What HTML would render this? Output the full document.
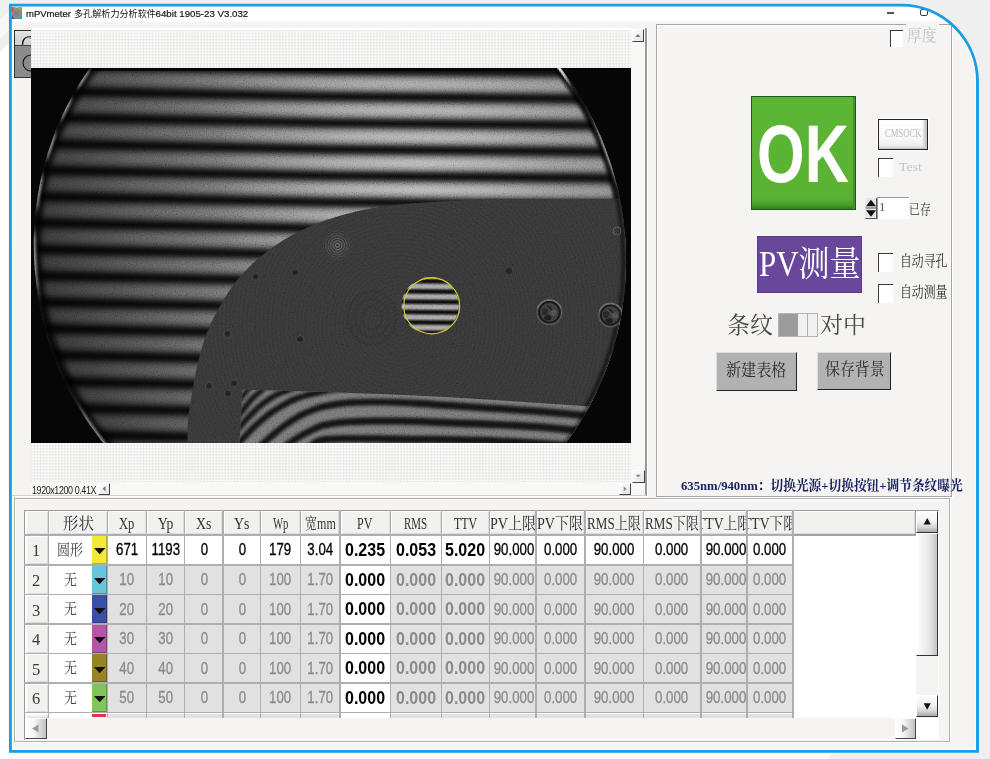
<!DOCTYPE html><html><head><meta charset="utf-8"><title>mPVmeter</title><style>
html,body{margin:0;padding:0}
html{background:#efefef}
body{width:990px;height:759px;overflow:hidden;background:#efefef;position:relative;font-family:"Liberation Sans",sans-serif}
#frame{position:absolute;left:10px;top:5px;width:968px;height:747px;border-top-right-radius:77px 77px;background:#f5f4f2;overflow:hidden}
#in{position:absolute;left:-10px;top:-5px;width:990px;height:759px}
</style></head><body><svg style="position:absolute;left:0;top:0" width="990" height="759"><polygon points="0,52 9,43 9,759 0,759" fill="#fff"/><polygon points="0,20 9,11 9,30 0,39" fill="#f8f8f8"/><polygon points="0,753 833,753 827,759 0,759" fill="#fff"/></svg><div id="frame"><div id="in"><svg style="position:absolute;left:0;top:0" width="990" height="759"><path d="M12.60 7.30 H901.00 A74.30 74.30 0 0 1 975.30 81.60 V749.20 H12.60 Z" fill="none" stroke="#fdfbf8" stroke-width="1.6"/></svg><div style="position:absolute;left:12.00px;top:6.00px;width:964.00px;height:16.00px;background:#fff"></div><div style="position:absolute;left:12.00px;top:7.30px;width:9.80px;height:12.00px;background:conic-gradient(from 0deg at 45% 50%,#e8d020,#70c030 12%,#30b060 25%,#20b0c0 38%,#3070c8 50%,#3040b0 62%,#6030a0 70%,#d02828 85%,#e89020 94%,#e8d020)"></div><div style="position:absolute;left:12.00px;top:8.30px;width:8.80px;height:10.30px;background:radial-gradient(circle,#7c7c7c 0,#848484 30%,#787878 36%,#8c8c8c 42%,#8a8a8a 100%);border-radius:50%"></div><div style="position:absolute;left:26.00px;top:9.40px;font:normal 9.50px/9.50px 'Liberation Sans';color:#151515;white-space:nowrap;transform-origin:0 0;transform:scaleX(1.000);-webkit-text-stroke:0.2px #151515;">mPVmeter</div><svg role="img" aria-label="多孔解析力分析软件" style="position:absolute;left:73.80px;top:9.30px;overflow:visible;" width="81.90" height="9.10" viewBox="0 -880 9000 1000" preserveAspectRatio="none"><text x="0" y="0" font-size="1000" textLength="9000" lengthAdjust="spacingAndGlyphs" fill="#151515" font-family="'Liberation Sans','Noto Sans CJK SC',sans-serif">多孔解析力分析软件</text></svg><div style="position:absolute;left:155.60px;top:9.40px;font:normal 9.70px/9.70px 'Liberation Sans';color:#151515;white-space:nowrap;transform-origin:0 0;transform:scaleX(1.000);-webkit-text-stroke:0.2px #151515;">64bit 1905-23 V3.032</div><div style="position:absolute;left:886.60px;top:12.20px;width:7.40px;height:1.40px;background:#555"></div><div style="position:absolute;left:920.2px;top:8.6px;width:5.4px;height:5.4px;border:1.5px solid #2a2a2a;border-radius:2.2px"></div><div style="position:absolute;left:13.50px;top:30.00px;width:18.00px;height:47.70px;background:#8c8c8c;border:1px solid #333;box-sizing:border-box"></div><div style="position:absolute;left:14.50px;top:31.00px;width:17.00px;height:14.00px;background:linear-gradient(#e4e4e4,#cfcfcf)"></div><div style="position:absolute;left:14.50px;top:45.00px;width:17.00px;height:1.00px;background:#444"></div><svg style="position:absolute;left:13.5px;top:30px" width="18" height="48" viewBox="0 0 18 48"><path d="M8.5 15 C8.5 9 11 6.5 18 6.5" fill="none" stroke="#111" stroke-width="1.2"/><circle cx="17" cy="33" r="8" fill="none" stroke="#111" stroke-width="1.1"/><rect x="15.5" y="7.5" width="2" height="1.5" fill="#4ab8e0"/></svg><div style="position:absolute;left:31.00px;top:28.00px;width:615.00px;height:468.00px;background:#fff"></div><svg style="position:absolute;left:31px;top:30px" width="600" height="452" viewBox="0 0 600 452"><defs><pattern id="dots" x="0.4" y="0.5" width="3.03" height="3.03" patternUnits="userSpaceOnUse"><rect x="0.7" y="0.7" width="1.7" height="1.7" fill="#fff"/></pattern></defs><rect width="600" height="452" fill="#ebebea"/><rect width="600" height="452" fill="url(#dots)"/></svg><div style="position:absolute;left:631.00px;top:28.00px;width:14.30px;height:454.00px;background:#f8f8f7"></div><div style="position:absolute;left:31.00px;top:482.00px;width:614.00px;height:13.20px;background:#f8f8f7"></div><div style="position:absolute;left:645.30px;top:28.00px;width:1.50px;height:468.30px;background:#9a9a9a"></div><div style="position:absolute;left:646.80px;top:28.00px;width:1.70px;height:468.30px;background:#fff"></div><div style="position:absolute;left:12.00px;top:495.20px;width:634.00px;height:1.00px;background:#d0d0d0"></div><div style="position:absolute;left:12.00px;top:496.20px;width:637.00px;height:1.20px;background:#fff"></div><div style="position:absolute;left:631.50px;top:29.00px;width:12.70px;height:13.30px;background:linear-gradient(135deg,#fff,#e2e2e2);border-right:1.4px solid #444;border-bottom:1.4px solid #444;border-top:1px solid #fff;border-left:1px solid #fff;box-sizing:border-box"></div><svg style="position:absolute;left:0;top:0;overflow:visible" width="1" height="1"><polygon points="635.2,36.9 640.5,36.9 637.9,34.0" fill="#777"/></svg><div style="position:absolute;left:631.50px;top:469.50px;width:13.30px;height:13.00px;background:linear-gradient(135deg,#fff,#e2e2e2);border-right:1.4px solid #444;border-bottom:1.4px solid #444;border-top:1px solid #fff;border-left:1px solid #fff;box-sizing:border-box"></div><svg style="position:absolute;left:0;top:0;overflow:visible" width="1" height="1"><polygon points="635.5,474.7 640.8,474.7 638.1,477.6" fill="#888"/></svg><div style="position:absolute;left:618.70px;top:482.90px;width:12.50px;height:12.10px;background:linear-gradient(135deg,#fff,#e2e2e2);border-right:1.4px solid #444;border-bottom:1.4px solid #444;border-top:1px solid #fff;border-left:1px solid #fff;box-sizing:border-box"></div><svg style="position:absolute;left:0;top:0;overflow:visible" width="1" height="1"><polygon points="623.7,486.3 623.7,491.6 626.6,488.9" fill="#888"/></svg><div style="position:absolute;left:98.00px;top:482.50px;width:12.40px;height:12.50px;background:linear-gradient(135deg,#fff,#e2e2e2);border-right:1.4px solid #444;border-bottom:1.4px solid #444;border-top:1px solid #fff;border-left:1px solid #fff;box-sizing:border-box"></div><svg style="position:absolute;left:0;top:0;overflow:visible" width="1" height="1"><polygon points="105.5,486.1 105.5,491.4 102.6,488.8" fill="#777"/></svg><div style="position:absolute;left:32.40px;top:485.70px;font:normal 10.20px/10.20px 'Liberation Sans';color:#222;white-space:nowrap;transform-origin:0 0;transform:scaleX(0.880);letter-spacing:-0.47px">1920x1200 0.41X</div><svg style="position:absolute;left:31px;top:68px" width="600" height="375" viewBox="31 68 600 375"><defs><linearGradient id="st" gradientUnits="userSpaceOnUse" x1="0" y1="0" x2="0" y2="26.4" spreadMethod="repeat" gradientTransform="translate(330 83.4) rotate(1.12)"><stop offset="0" stop-color="#8c8c8c"/><stop offset="0.1" stop-color="#868686"/><stop offset="0.19" stop-color="#737373"/><stop offset="0.27" stop-color="#585858"/><stop offset="0.34" stop-color="#383838"/><stop offset="0.41" stop-color="#1e1e1e"/><stop offset="0.5" stop-color="#0e0e0e"/><stop offset="0.59" stop-color="#1e1e1e"/><stop offset="0.66" stop-color="#383838"/><stop offset="0.73" stop-color="#585858"/><stop offset="0.81" stop-color="#737373"/><stop offset="0.9" stop-color="#868686"/><stop offset="1" stop-color="#8c8c8c"/></linearGradient><linearGradient id="stR" gradientUnits="userSpaceOnUse" x1="0" y1="0" x2="0" y2="26.4" spreadMethod="repeat" gradientTransform="translate(330 83.4) rotate(0.5)"><stop offset="0" stop-color="#8c8c8c"/><stop offset="0.1" stop-color="#868686"/><stop offset="0.19" stop-color="#737373"/><stop offset="0.27" stop-color="#585858"/><stop offset="0.34" stop-color="#383838"/><stop offset="0.41" stop-color="#1e1e1e"/><stop offset="0.5" stop-color="#0e0e0e"/><stop offset="0.59" stop-color="#1e1e1e"/><stop offset="0.66" stop-color="#383838"/><stop offset="0.73" stop-color="#585858"/><stop offset="0.81" stop-color="#737373"/><stop offset="0.9" stop-color="#868686"/><stop offset="1" stop-color="#8c8c8c"/></linearGradient><linearGradient id="rim" gradientUnits="userSpaceOnUse" x1="0" y1="0" x2="0" y2="26.4" spreadMethod="repeat" gradientTransform="translate(330 83.4) rotate(1.12)"><stop offset="0" stop-color="#f0f0f0"/><stop offset="0.22" stop-color="#c8c8c8"/><stop offset="0.36" stop-color="#202020"/><stop offset="0.5" stop-color="#080808"/><stop offset="0.64" stop-color="#202020"/><stop offset="0.78" stop-color="#c8c8c8"/><stop offset="1" stop-color="#f0f0f0"/></linearGradient><linearGradient id="rimR" gradientUnits="userSpaceOnUse" x1="0" y1="0" x2="0" y2="26.4" spreadMethod="repeat" gradientTransform="translate(330 83.4) rotate(0.5)"><stop offset="0" stop-color="#f0f0f0"/><stop offset="0.22" stop-color="#c8c8c8"/><stop offset="0.36" stop-color="#202020"/><stop offset="0.5" stop-color="#080808"/><stop offset="0.64" stop-color="#202020"/><stop offset="0.78" stop-color="#c8c8c8"/><stop offset="1" stop-color="#f0f0f0"/></linearGradient><linearGradient id="lv" gradientUnits="userSpaceOnUse" x1="31" y1="0" x2="340" y2="0"><stop offset="0" stop-color="#000" stop-opacity="0.46"/><stop offset="0.3" stop-color="#000" stop-opacity="0.30"/><stop offset="0.7" stop-color="#000" stop-opacity="0.08"/><stop offset="1" stop-color="#000" stop-opacity="0"/></linearGradient><clipPath id="cL"><rect x="0" y="0" width="330" height="500"/></clipPath><clipPath id="cR"><rect x="330" y="0" width="400" height="500"/></clipPath><linearGradient id="st2" gradientUnits="userSpaceOnUse" x1="0" y1="0" x2="0" y2="10.3" spreadMethod="repeat" gradientTransform="translate(430 286.4) rotate(0.5)"><stop offset="0" stop-color="#a6a6a6"/><stop offset="0.14" stop-color="#9a9a9a"/><stop offset="0.3" stop-color="#444444"/><stop offset="0.42" stop-color="#141414"/><stop offset="0.5" stop-color="#0c0c0c"/><stop offset="0.58" stop-color="#141414"/><stop offset="0.7" stop-color="#444444"/><stop offset="0.86" stop-color="#9a9a9a"/><stop offset="1" stop-color="#a6a6a6"/></linearGradient><radialGradient id="vig" gradientUnits="userSpaceOnUse" cx="430" cy="165" r="420"><stop offset="0" stop-color="#000" stop-opacity="0"/><stop offset="0.4" stop-color="#000" stop-opacity="0.02"/><stop offset="0.7" stop-color="#000" stop-opacity="0.12"/><stop offset="0.9" stop-color="#000" stop-opacity="0.25"/><stop offset="1" stop-color="#000" stop-opacity="0.35"/></radialGradient><radialGradient id="wring" gradientUnits="userSpaceOnUse" cx="400" cy="325" r="4.2" spreadMethod="repeat"><stop offset="0" stop-color="#fff" stop-opacity="0.012"/><stop offset="0.5" stop-color="#000" stop-opacity="0.025"/><stop offset="1" stop-color="#fff" stop-opacity="0.012"/></radialGradient><linearGradient id="sb" gradientUnits="userSpaceOnUse" x1="0" y1="0" x2="0" y2="26.4" spreadMethod="repeat" gradientTransform="translate(330 83.4) rotate(1.12)"><stop offset="0" stop-color="#c0c0c0"/><stop offset="0.1" stop-color="#b6b6b6"/><stop offset="0.19" stop-color="#989898"/><stop offset="0.27" stop-color="#707070"/><stop offset="0.34" stop-color="#444444"/><stop offset="0.41" stop-color="#222222"/><stop offset="0.5" stop-color="#0e0e0e"/><stop offset="0.59" stop-color="#222222"/><stop offset="0.66" stop-color="#444444"/><stop offset="0.73" stop-color="#707070"/><stop offset="0.81" stop-color="#989898"/><stop offset="0.9" stop-color="#b6b6b6"/><stop offset="1" stop-color="#c0c0c0"/></linearGradient><linearGradient id="sbR" gradientUnits="userSpaceOnUse" x1="0" y1="0" x2="0" y2="26.4" spreadMethod="repeat" gradientTransform="translate(330 83.4) rotate(0.5)"><stop offset="0" stop-color="#c0c0c0"/><stop offset="0.1" stop-color="#b6b6b6"/><stop offset="0.19" stop-color="#989898"/><stop offset="0.27" stop-color="#707070"/><stop offset="0.34" stop-color="#444444"/><stop offset="0.41" stop-color="#222222"/><stop offset="0.5" stop-color="#0e0e0e"/><stop offset="0.59" stop-color="#222222"/><stop offset="0.66" stop-color="#444444"/><stop offset="0.73" stop-color="#707070"/><stop offset="0.81" stop-color="#989898"/><stop offset="0.9" stop-color="#b6b6b6"/><stop offset="1" stop-color="#c0c0c0"/></linearGradient><radialGradient id="hm" gradientUnits="userSpaceOnUse" cx="420" cy="175" r="210"><stop offset="0" stop-color="#fff" stop-opacity="0.85"/><stop offset="0.35" stop-color="#fff" stop-opacity="0.6"/><stop offset="0.7" stop-color="#fff" stop-opacity="0.22"/><stop offset="1" stop-color="#fff" stop-opacity="0"/></radialGradient><mask id="hot" maskUnits="userSpaceOnUse" x="31" y="68" width="600" height="376"><rect x="31" y="68" width="600" height="376" fill="url(#hm)"/></mask><clipPath id="cE"><ellipse cx="329.9" cy="252.8" rx="306.1" ry="294.7" transform="rotate(69.3 329.9 252.8)"/></clipPath><clipPath id="cW"><path d="M187.5 443.0C187.6 439.2 187.4 427.2 188.0 420.0C188.6 412.8 189.4 409.2 191.0 400.0C192.6 390.8 194.8 375.8 197.5 364.5C200.2 353.2 203.2 342.4 207.2 332.2C211.2 322.0 216.3 312.2 221.7 303.1C227.1 294.0 232.5 285.5 239.5 277.3C246.5 269.1 255.3 260.8 263.7 254.0C272.1 247.2 280.4 241.7 289.6 236.5C298.8 231.3 308.5 226.9 318.7 223.0C328.9 219.1 339.1 215.7 351.0 212.8C362.9 209.9 376.9 207.3 389.8 205.6C402.7 203.8 416.6 203.2 428.6 202.3C440.6 201.4 450.9 200.8 462.0 200.2C473.1 199.6 489.5 198.9 495.0 198.7L640 198.7L640 450L187.5 450Z"/></clipPath><clipPath id="cP"><path d="M242.2 389.7Q360 392.5 445 397.1Q520 401.5 590 406.4L640 410L640 444L239.5 444Z"/></clipPath><filter id="b0" x="-30%" y="-30%" width="160%" height="160%"><feGaussianBlur stdDeviation="0.5"/></filter><filter id="b1" x="-5%" y="-5%" width="110%" height="110%"><feGaussianBlur stdDeviation="0.9"/></filter><filter id="b2" x="-5%" y="-50%" width="110%" height="200%"><feGaussianBlur stdDeviation="1.6"/></filter><filter id="b4" x="-5%" y="-5%" width="110%" height="110%"><feGaussianBlur stdDeviation="2.8"/></filter><filter id="b3" x="-5%" y="-50%" width="110%" height="200%"><feGaussianBlur stdDeviation="1.7"/></filter><filter id="nz" x="0" y="0" width="100%" height="100%"><feTurbulence type="fractalNoise" baseFrequency="0.9" numOctaves="2" seed="3" result="n"/><feColorMatrix type="matrix" values="1.6 0 0 0 -0.3  1.6 0 0 0 -0.3  1.6 0 0 0 -0.3  0 0 0 0 1"/></filter></defs><rect x="31" y="68" width="600" height="376" fill="#060606"/><g clip-path="url(#cE)"><rect x="31" y="68" width="299.5" height="376" fill="url(#st)"/><rect x="330" y="68" width="301" height="376" fill="url(#stR)"/><g mask="url(#hot)"><rect x="31" y="68" width="299.5" height="376" fill="url(#sb)"/><rect x="330" y="68" width="301" height="376" fill="url(#sbR)"/></g><rect x="31" y="68" width="600" height="376" fill="url(#vig)"/><rect x="31" y="68" width="310" height="376" fill="url(#lv)"/><rect x="31" y="68" width="600" height="3" fill="#000" opacity="0.75"/><g clip-path="url(#cL)"><ellipse cx="329.9" cy="252.8" rx="306.1" ry="294.7" transform="rotate(69.3 329.9 252.8)" fill="none" stroke="#000" stroke-opacity="0.8" stroke-width="15" filter="url(#b4)"/></g><g clip-path="url(#cR)"><ellipse cx="329.9" cy="252.8" rx="306.1" ry="294.7" transform="rotate(69.3 329.9 252.8)" fill="none" stroke="#000" stroke-opacity="0.85" stroke-width="13" filter="url(#b2)"/></g><g clip-path="url(#cL)" opacity="0.55"><ellipse cx="329.9" cy="252.8" rx="306.1" ry="294.7" transform="rotate(69.3 329.9 252.8)" fill="none" stroke="url(#rim)" stroke-width="4.4" filter="url(#b1)"/></g><g clip-path="url(#cR)"><ellipse cx="329.9" cy="252.8" rx="306.1" ry="294.7" transform="rotate(69.3 329.9 252.8)" fill="none" stroke="url(#rimR)" stroke-width="6" filter="url(#b0)"/></g><g clip-path="url(#cW)"><rect x="31" y="68" width="600" height="376" fill="#343434"/><rect x="31" y="68" width="600" height="376" fill="url(#wring)"/><ellipse cx="329.9" cy="252.8" rx="306.1" ry="294.7" transform="rotate(69.3 329.9 252.8)" fill="none" stroke="#000" stroke-opacity="0.6" stroke-width="9" filter="url(#b2)"/><ellipse cx="329.9" cy="252.8" rx="306.1" ry="294.7" transform="rotate(69.3 329.9 252.8)" fill="none" stroke="#4a4a4a" stroke-width="1.2" filter="url(#b1)"/><circle cx="337.5" cy="245.3" r="2" fill="none" stroke="#888" stroke-opacity="0.75" stroke-width="1"/><circle cx="337.5" cy="245.3" r="4.5" fill="none" stroke="#888" stroke-opacity="0.6" stroke-width="1"/><circle cx="337.5" cy="245.3" r="7" fill="none" stroke="#888" stroke-opacity="0.45" stroke-width="1"/><circle cx="337.5" cy="245.3" r="9.5" fill="none" stroke="#888" stroke-opacity="0.32" stroke-width="1"/><circle cx="337.5" cy="245.3" r="12" fill="none" stroke="#888" stroke-opacity="0.2" stroke-width="1"/><circle cx="337.5" cy="245.3" r="14.5" fill="none" stroke="#888" stroke-opacity="0.1" stroke-width="1"/><circle cx="295" cy="272.4" r="3.6" fill="#262626" stroke="#3e3e3e" stroke-width="1.2" filter="url(#b0)"/><circle cx="295" cy="272.4" r="1.4" fill="#1c1c1c"/><circle cx="255.6" cy="276.6" r="3.6" fill="#262626" stroke="#3e3e3e" stroke-width="1.2" filter="url(#b0)"/><circle cx="255.6" cy="276.6" r="1.4" fill="#1c1c1c"/><circle cx="227.5" cy="333.8" r="3.6" fill="#262626" stroke="#3e3e3e" stroke-width="1.2" filter="url(#b0)"/><circle cx="227.5" cy="333.8" r="1.4" fill="#1c1c1c"/><circle cx="300" cy="339.3" r="3.6" fill="#262626" stroke="#3e3e3e" stroke-width="1.2" filter="url(#b0)"/><circle cx="300" cy="339.3" r="1.4" fill="#1c1c1c"/><circle cx="234" cy="383.3" r="3.6" fill="#262626" stroke="#3e3e3e" stroke-width="1.2" filter="url(#b0)"/><circle cx="234" cy="383.3" r="1.4" fill="#1c1c1c"/><circle cx="228" cy="393.6" r="3.6" fill="#262626" stroke="#3e3e3e" stroke-width="1.2" filter="url(#b0)"/><circle cx="228" cy="393.6" r="1.4" fill="#1c1c1c"/><circle cx="209" cy="386" r="3.6" fill="#262626" stroke="#3e3e3e" stroke-width="1.2" filter="url(#b0)"/><circle cx="209" cy="386" r="1.4" fill="#1c1c1c"/><ellipse cx="372" cy="318" rx="10" ry="11.0" fill="none" stroke="#000" stroke-opacity="0.05" stroke-width="3"/><ellipse cx="372" cy="318" rx="17" ry="18.700000000000003" fill="none" stroke="#000" stroke-opacity="0.05" stroke-width="3"/><ellipse cx="372" cy="318" rx="24" ry="26.400000000000002" fill="none" stroke="#000" stroke-opacity="0.05" stroke-width="3"/><g filter="url(#b0)"><circle cx="549.4" cy="312.2" r="12.4" fill="#3a3a3a" stroke="#505050" stroke-width="1.4"/><path d="M537.6 308.5 A12.4 12.4 0 0 1 561.2 308.5" fill="none" stroke="#686868" stroke-width="1.5"/><circle cx="549.4" cy="312.2" r="10.3" fill="none" stroke="#171717" stroke-width="1.7"/><ellipse cx="547.9" cy="317.7" rx="3.6" ry="2.6" fill="#1e1e1e"/><ellipse cx="544.9" cy="311.7" rx="3" ry="3.4" fill="#262626"/><ellipse cx="553.6" cy="312.7" rx="3.2" ry="3" fill="#4e4e4e"/><path d="M547.4 306.2 q3 1 4.5 4" stroke="#1a1a1a" stroke-width="1.3" fill="none"/></g><g filter="url(#b0)"><circle cx="610.6" cy="315" r="11.8" fill="#3a3a3a" stroke="#505050" stroke-width="1.4"/><path d="M599.4 311.5 A11.8 11.8 0 0 1 621.8 311.5" fill="none" stroke="#686868" stroke-width="1.5"/><circle cx="610.6" cy="315" r="9.700000000000001" fill="none" stroke="#171717" stroke-width="1.7"/><ellipse cx="609.1" cy="320.5" rx="3.6" ry="2.6" fill="#1e1e1e"/><ellipse cx="606.1" cy="314.5" rx="3" ry="3.4" fill="#262626"/><ellipse cx="614.8" cy="315.5" rx="3.2" ry="3" fill="#4e4e4e"/><path d="M608.6 309.0 q3 1 4.5 4" stroke="#1a1a1a" stroke-width="1.3" fill="none"/></g><circle cx="509" cy="271" r="3" fill="#222"/><circle cx="617" cy="231" r="4" fill="none" stroke="#555" stroke-width="1"/></g><circle cx="430.2" cy="305.7" r="28.6" fill="url(#st2)"/><circle cx="431.7" cy="305.9" r="28" fill="none" stroke="#d2ca24" stroke-width="1.1"/><g clip-path="url(#cP)"><rect x="230" y="380" width="420" height="70" fill="#828282"/><g fill="#121212" filter="url(#b3)"><path d="M238.9 405.4C239.7 404.2 242.4 400.5 244.1 398.2C245.9 395.9 247.9 393.4 249.5 391.5C251.1 389.5 253.1 387.4 253.8 386.5L250.2 383.5C249.5 384.3 247.5 386.5 245.9 388.5C244.3 390.5 242.2 393.0 240.5 395.4C238.7 397.7 236.0 401.4 235.1 402.6Z"/><path d="M238.2 421.1C239.2 419.7 241.4 416.3 244.0 413.1C246.5 409.8 250.2 404.8 253.4 401.4C256.6 398.0 260.7 394.9 263.2 392.6C265.8 390.3 267.9 388.4 268.8 387.6L265.2 383.4C264.2 384.3 262.2 386.1 259.6 388.4C256.9 390.8 252.7 394.1 249.4 397.6C246.1 401.2 242.2 406.4 239.6 409.7C237.0 413.1 234.8 416.6 233.8 417.9Z"/><path d="M238.2 433.4C239.1 432.3 240.7 430.1 243.6 426.9C246.4 423.8 251.2 418.3 255.2 414.4C259.2 410.5 263.7 406.7 267.7 403.8C271.6 400.8 275.8 398.4 279.1 396.7C282.3 395.1 283.8 395.0 287.0 393.8C290.2 392.5 296.3 390.0 298.1 389.3L295.9 383.7C294.0 384.5 288.1 386.9 284.8 388.2C281.6 389.5 279.8 389.7 276.3 391.5C272.9 393.3 268.3 395.9 264.1 399.0C260.0 402.2 255.3 406.2 251.2 410.2C247.0 414.2 242.1 419.8 239.2 423.1C236.3 426.3 234.7 428.5 233.8 429.6Z"/><path d="M238.3 448.6C239.1 447.7 240.0 446.6 242.8 443.5C245.6 440.4 251.1 434.1 255.4 429.9C259.7 425.8 264.3 421.8 268.7 418.4C273.2 415.0 277.7 412.2 282.1 409.5C286.6 406.9 291.0 404.3 295.4 402.4C299.8 400.5 304.9 399.2 308.6 398.1C312.3 397.0 313.0 396.8 317.5 395.9C322.0 394.9 329.7 393.2 335.6 392.2C341.4 391.2 349.7 390.2 352.5 389.8L351.5 383.2C348.7 383.7 340.3 384.7 334.4 385.8C328.5 386.8 320.7 388.5 316.1 389.5C311.5 390.6 310.7 390.7 306.8 391.9C302.9 393.1 297.5 394.5 292.8 396.6C288.2 398.6 283.5 401.3 278.9 404.1C274.2 406.9 269.5 409.8 264.9 413.4C260.2 417.0 255.5 421.1 251.0 425.5C246.6 429.8 241.1 436.1 238.2 439.3C235.3 442.5 234.4 443.6 233.7 444.4Z"/><path d="M262.3 448.9C263.1 448.1 264.6 446.6 267.2 444.3C269.8 441.9 274.0 438.1 278.0 434.9C282.0 431.7 286.9 428.1 291.4 425.1C295.8 422.1 300.3 419.4 304.7 417.1C309.2 414.9 314.5 413.1 317.9 411.8C321.4 410.6 321.9 410.6 325.7 409.8C329.5 409.0 335.7 407.9 340.5 407.3C345.2 406.6 347.0 406.3 354.1 406.0C361.3 405.8 373.3 405.5 383.5 405.6C393.6 405.8 404.9 406.3 415.1 406.9C425.3 407.4 430.6 408.0 444.8 408.9C458.9 409.8 482.8 411.4 499.8 412.5C516.7 413.6 532.6 414.5 546.7 415.7C560.8 416.9 572.5 418.1 584.6 419.5C596.7 420.8 613.7 423.0 619.6 423.7L620.4 416.3C614.6 415.6 597.6 413.5 585.4 412.1C573.2 410.8 561.5 409.5 547.3 408.3C533.1 407.1 517.3 406.2 500.2 405.1C483.2 404.0 459.4 402.4 445.2 401.5C431.1 400.6 425.8 400.0 415.5 399.5C405.2 399.0 393.8 398.5 383.5 398.4C373.3 398.3 361.2 398.6 353.9 399.0C346.5 399.3 344.5 399.7 339.5 400.3C334.6 401.0 328.3 402.2 324.3 403.0C320.3 403.8 319.4 404.0 315.7 405.4C311.9 406.7 306.3 408.7 301.7 411.1C297.0 413.4 292.3 416.4 287.6 419.5C283.0 422.6 278.0 426.4 273.8 429.7C269.7 433.0 265.5 436.9 262.8 439.3C260.1 441.7 258.6 443.3 257.7 444.1Z"/><path d="M287.1 449.3C288.1 448.6 290.4 446.7 293.3 444.7C296.3 442.8 300.8 439.9 304.9 437.6C309.1 435.3 314.7 432.5 318.2 431.0C321.7 429.4 322.1 429.3 325.8 428.5C329.5 427.7 334.6 426.8 340.4 426.2C346.1 425.6 353.7 425.3 360.1 425.0C366.6 424.8 371.1 424.7 379.2 424.7C387.3 424.7 398.0 424.7 408.9 424.9C419.8 425.2 429.7 425.8 444.8 426.4C460.0 427.0 482.8 427.8 499.8 428.6C516.8 429.4 533.4 430.4 546.7 431.4C560.0 432.4 568.2 433.4 579.5 434.8C590.8 436.2 608.6 438.9 614.5 439.8L615.5 432.2C609.7 431.4 591.8 428.6 580.5 427.2C569.1 425.8 560.7 424.8 547.3 423.8C533.9 422.8 517.2 421.8 500.2 421.0C483.2 420.2 460.3 419.4 445.2 418.8C430.0 418.2 420.1 417.7 409.1 417.5C398.1 417.2 387.4 417.3 379.2 417.3C371.0 417.4 366.4 417.5 359.9 417.8C353.3 418.0 345.6 418.4 339.6 419.0C333.7 419.6 328.3 420.6 324.2 421.5C320.2 422.4 319.2 422.8 315.4 424.4C311.6 426.1 305.8 429.0 301.5 431.4C297.2 433.8 292.6 436.8 289.5 438.9C286.4 440.9 284.0 442.9 282.9 443.7Z"/><path d="M312.0 449.5C313.1 448.7 316.1 446.1 318.3 445.1C320.5 444.0 321.8 443.6 325.5 443.2C329.1 442.8 332.6 442.6 340.1 442.4C347.5 442.3 359.2 442.4 370.0 442.5C380.7 442.6 392.2 442.9 404.7 443.0C417.2 443.2 429.1 443.1 444.9 443.4C460.8 443.7 482.9 444.3 499.8 445.0C516.8 445.7 533.4 446.6 546.7 447.6C560.0 448.6 574.1 450.3 579.6 450.8L580.4 443.2C574.9 442.7 560.6 441.0 547.3 440.0C533.9 439.0 517.2 438.1 500.2 437.4C483.1 436.7 461.0 436.1 445.1 435.8C429.2 435.5 417.2 435.7 404.7 435.6C392.2 435.4 380.8 435.2 370.0 435.1C359.2 435.0 347.5 435.0 339.9 435.2C332.4 435.3 328.6 435.4 324.5 436.0C320.4 436.6 318.1 437.3 315.3 438.5C312.5 439.8 309.2 442.7 308.0 443.5Z"/></g><rect x="230" y="380" width="420" height="70" fill="#000" opacity="0.12"/><ellipse cx="329.9" cy="252.8" rx="306.1" ry="294.7" transform="rotate(69.3 329.9 252.8)" fill="none" stroke="#000" stroke-opacity="0.5" stroke-width="5" filter="url(#b2)"/></g></g><rect x="31" y="68" width="600" height="376" filter="url(#nz)" opacity="0.2" clip-path="url(#cE)" style="mix-blend-mode:overlay"/></svg><div style="position:absolute;left:656.00px;top:24.00px;width:296.00px;height:472.50px;border:1px solid #a6a6a6;box-shadow:1px 1px 0 #fff, inset 1px 1px 0 #fff;box-sizing:border-box;background:#f5f4f2"></div><div style="position:absolute;left:906.00px;top:23.00px;width:33.00px;height:3.50px;background:#f5f4f2"></div><div style="position:absolute;left:890.30px;top:30.10px;width:12.70px;height:16.60px;background:#fff;border-top:1.8px solid #3a3a3a;border-left:1.8px solid #3a3a3a;box-sizing:border-box"></div><svg role="img" aria-label="厚度" style="position:absolute;left:907.20px;top:26.60px;overflow:visible;" width="29.76" height="16.48" viewBox="0 -880 2000 1000" preserveAspectRatio="none"><text x="0" y="0" font-size="1000" textLength="2000" lengthAdjust="spacingAndGlyphs" fill="#bfc3c8" font-family="'Liberation Serif','Noto Serif CJK SC',serif">厚度</text></svg><div style="position:absolute;left:751.00px;top:95.50px;width:105.20px;height:114.00px;background:linear-gradient(#5cb534 0%,#59b232 91%,#46a02c 96%,#2f7e22 100%);border:1px solid #1f5a18;box-sizing:border-box;box-shadow:inset -2px 0 1px #3f9428"></div><div style="position:absolute;left:757.40px;top:113.80px;font:bold 81.00px/81.00px 'Liberation Sans';color:#fff;white-space:nowrap;transform-origin:0 0;transform:scaleX(0.756);">OK</div><div style="position:absolute;left:877.60px;top:118.70px;width:50.60px;height:31.30px;background:linear-gradient(#ffffff 0%,#fafafa 55%,#ebebeb 100%);border:1.2px solid #222;box-sizing:border-box;box-shadow:inset -3px -1.5px 2.5px #c4c4c4,0 0 0 1px #fff"></div><svg role="img" aria-label="CMSOCK" style="position:absolute;left:884.60px;top:126.40px;overflow:visible;" width="36.60" height="12.20" viewBox="0 -880 3000 1000" preserveAspectRatio="none"><text x="0" y="0" font-size="1000" textLength="3000" lengthAdjust="spacingAndGlyphs" fill="#b4bec8" font-family="'Liberation Serif','Noto Serif CJK SC',serif">CMSOCK</text></svg><div style="position:absolute;left:878.20px;top:157.80px;width:14.80px;height:19.20px;background:#fff;border-top:1.8px solid #3a3a3a;border-left:1.8px solid #3a3a3a;box-sizing:border-box"></div><svg role="img" aria-label="Test" style="position:absolute;left:899.40px;top:159.50px;overflow:visible;" width="22.88" height="13.00" viewBox="0 -880 1760 1000" preserveAspectRatio="none"><text x="0" y="0" font-size="1000" textLength="1760" lengthAdjust="spacingAndGlyphs" fill="#c0c6cc" font-family="'Liberation Serif','Noto Serif CJK SC',serif">Test</text></svg><div style="position:absolute;left:876.80px;top:196.80px;width:32.70px;height:22.00px;background:#fff;border-top:1px solid #999;border-left:1px solid #999;box-sizing:border-box"></div><svg style="position:absolute;left:864.5px;top:197.6px" width="12" height="21" viewBox="0 0 12 21"><rect x="0" y="0" width="12" height="10" fill="#e8e8e8"/><rect x="0" y="10.5" width="12" height="10.5" fill="#e8e8e8"/><path d="M0.5 10 H11.5 M11.5 0 V21 M0.5 20.5 H11.5" stroke="#555" stroke-width="1" fill="none"/><polygon points="1,8.2 11,8.2 6,1.8" fill="#111"/><polygon points="1,12.3 11,12.3 6,18.7" fill="#111"/></svg><svg role="img" aria-label="1" style="position:absolute;left:879.00px;top:199.80px;overflow:visible;" width="6.50" height="13.00" viewBox="0 -880 500 1000" preserveAspectRatio="none"><text x="0" y="0" font-size="1000" fill="#557" font-family="'Liberation Serif','Noto Serif CJK SC',serif">1</text></svg><svg role="img" aria-label="已存" style="position:absolute;left:909.20px;top:202.20px;overflow:visible;" width="21.87" height="13.50" viewBox="0 -880 2000 1000" preserveAspectRatio="none"><text x="0" y="0" font-size="1000" textLength="2000" lengthAdjust="spacingAndGlyphs" fill="#3a3a3a" font-family="'Liberation Serif','Noto Serif CJK SC',serif">已存</text></svg><div style="position:absolute;left:756.60px;top:236.40px;width:105.40px;height:56.60px;background:#69479b;border:1px solid #5a3c88;box-sizing:border-box"></div><svg role="img" aria-label="PV测量" style="position:absolute;left:758.60px;top:244.60px;overflow:visible;" width="101.47" height="35.64" viewBox="0 -880 3000 1000" preserveAspectRatio="none"><text x="0" y="0" font-size="1000" textLength="3000" lengthAdjust="spacingAndGlyphs" fill="#fff" font-family="'Liberation Serif','Noto Serif CJK SC',serif">PV测量</text></svg><div style="position:absolute;left:878.20px;top:252.50px;width:15.00px;height:19.00px;background:#fff;border-top:1.8px solid #3a3a3a;border-left:1.8px solid #3a3a3a;box-sizing:border-box"></div><div style="position:absolute;left:878.20px;top:283.60px;width:15.00px;height:19.00px;background:#fff;border-top:1.8px solid #3a3a3a;border-left:1.8px solid #3a3a3a;box-sizing:border-box"></div><svg role="img" aria-label="自动寻孔" style="position:absolute;left:899.60px;top:252.80px;overflow:visible;" width="47.40" height="15.00" viewBox="0 -880 4000 1000" preserveAspectRatio="none"><text x="0" y="0" font-size="1000" textLength="4000" lengthAdjust="spacingAndGlyphs" fill="#2a2a2a" font-family="'Liberation Serif','Noto Serif CJK SC',serif">自动寻孔</text></svg><svg role="img" aria-label="自动测量" style="position:absolute;left:899.60px;top:283.80px;overflow:visible;" width="47.40" height="15.00" viewBox="0 -880 4000 1000" preserveAspectRatio="none"><text x="0" y="0" font-size="1000" textLength="4000" lengthAdjust="spacingAndGlyphs" fill="#2a2a2a" font-family="'Liberation Serif','Noto Serif CJK SC',serif">自动测量</text></svg><svg role="img" aria-label="条纹" style="position:absolute;left:727.20px;top:313.00px;overflow:visible;" width="46.00" height="23.00" viewBox="0 -880 2000 1000" preserveAspectRatio="none"><text x="0" y="0" font-size="1000" textLength="2000" lengthAdjust="spacingAndGlyphs" fill="#4a4a4a" font-family="'Liberation Serif','Noto Serif CJK SC',serif">条纹</text></svg><div style="position:absolute;left:778.30px;top:312.80px;width:39.50px;height:24.00px;background:linear-gradient(90deg,#9c9c9c 0,#9c9c9c 50%,#f0f0f0 50%,#f0f0f0 74%,#b0b0b0 74%,#b0b0b0 77%,#f0f0f0 77%);border:1px solid #b4b4b4;box-sizing:border-box"></div><svg role="img" aria-label="对中" style="position:absolute;left:820.20px;top:313.00px;overflow:visible;" width="46.00" height="23.00" viewBox="0 -880 2000 1000" preserveAspectRatio="none"><text x="0" y="0" font-size="1000" textLength="2000" lengthAdjust="spacingAndGlyphs" fill="#4a4a4a" font-family="'Liberation Serif','Noto Serif CJK SC',serif">对中</text></svg><div style="position:absolute;left:716.10px;top:352.40px;width:81.10px;height:38.90px;background:#b2b2b2;border-top:1px solid #ddd;border-left:1px solid #ddd;border-right:1.6px solid #222;border-bottom:1.6px solid #222;box-sizing:border-box"></div><div style="position:absolute;left:817.40px;top:352.40px;width:73.80px;height:37.60px;background:#b2b2b2;border-top:1px solid #ddd;border-left:1px solid #ddd;border-right:1.6px solid #222;border-bottom:1.6px solid #222;box-sizing:border-box"></div><svg role="img" aria-label="新建表格" style="position:absolute;left:726.00px;top:361.40px;overflow:visible;" width="60.42" height="16.60" viewBox="0 -880 4000 1000" preserveAspectRatio="none"><text x="0" y="0" font-size="1000" textLength="4000" lengthAdjust="spacingAndGlyphs" fill="#2c2c2c" font-family="'Liberation Serif','Noto Serif CJK SC',serif">新建表格</text></svg><svg role="img" aria-label="保存背景" style="position:absolute;left:824.50px;top:360.20px;overflow:visible;" width="59.76" height="16.60" viewBox="0 -880 4000 1000" preserveAspectRatio="none"><text x="0" y="0" font-size="1000" textLength="4000" lengthAdjust="spacingAndGlyphs" fill="#2c2c2c" font-family="'Liberation Serif','Noto Serif CJK SC',serif">保存背景</text></svg><svg role="img" aria-label="635nm/940nm：切换光源+切换按钮+调节条纹曝光" style="position:absolute;left:681.40px;top:477.60px;overflow:visible;" width="281.65" height="13.10" viewBox="0 -880 21500 1000" preserveAspectRatio="none"><text x="0" y="0" font-size="1000" font-weight="bold" textLength="21500" lengthAdjust="spacingAndGlyphs" fill="#1c2464" font-family="'Liberation Serif','Noto Serif CJK SC',serif">635nm/940nm：切换光源+切换按钮+调节条纹曝光</text></svg><div style="position:absolute;left:13.50px;top:497.60px;width:936.00px;height:244.40px;border:1px solid #b0b0b0;box-shadow:inset 1px 1px 0 #fff,1px 1px 0 #fff;box-sizing:border-box;background:#f5f4f2"></div><div style="position:absolute;left:24.00px;top:509.50px;width:914.50px;height:230.00px;background:#fff;border-top:1.5px solid #9a9a9a;border-left:1.5px solid #9a9a9a;box-sizing:border-box"></div><div style="position:absolute;left:25.55px;top:511.00px;width:22.30px;height:23.20px;background:#f1f1f0;border-top:1px solid #fff;border-left:1px solid #fff;box-shadow:inset -1px -1px 0 #dcdcdc;box-sizing:border-box;overflow:hidden"></div><div style="position:absolute;left:49.15px;top:511.00px;width:57.70px;height:23.20px;background:#f1f1f0;border-top:1px solid #fff;border-left:1px solid #fff;box-shadow:inset -1px -1px 0 #dcdcdc;box-sizing:border-box;overflow:hidden"></div><div style="position:absolute;left:108.15px;top:511.00px;width:38.00px;height:23.20px;background:#f1f1f0;border-top:1px solid #fff;border-left:1px solid #fff;box-shadow:inset -1px -1px 0 #dcdcdc;box-sizing:border-box;overflow:hidden"></div><div style="position:absolute;left:147.45px;top:511.00px;width:36.70px;height:23.20px;background:#f1f1f0;border-top:1px solid #fff;border-left:1px solid #fff;box-shadow:inset -1px -1px 0 #dcdcdc;box-sizing:border-box;overflow:hidden"></div><div style="position:absolute;left:185.45px;top:511.00px;width:36.90px;height:23.20px;background:#f1f1f0;border-top:1px solid #fff;border-left:1px solid #fff;box-shadow:inset -1px -1px 0 #dcdcdc;box-sizing:border-box;overflow:hidden"></div><div style="position:absolute;left:223.65px;top:511.00px;width:36.50px;height:23.20px;background:#f1f1f0;border-top:1px solid #fff;border-left:1px solid #fff;box-shadow:inset -1px -1px 0 #dcdcdc;box-sizing:border-box;overflow:hidden"></div><div style="position:absolute;left:261.45px;top:511.00px;width:38.10px;height:23.20px;background:#f1f1f0;border-top:1px solid #fff;border-left:1px solid #fff;box-shadow:inset -1px -1px 0 #dcdcdc;box-sizing:border-box;overflow:hidden"></div><div style="position:absolute;left:300.85px;top:511.00px;width:38.40px;height:23.20px;background:#f1f1f0;border-top:1px solid #fff;border-left:1px solid #fff;box-shadow:inset -1px -1px 0 #dcdcdc;box-sizing:border-box;overflow:hidden"></div><div style="position:absolute;left:340.55px;top:511.00px;width:49.00px;height:23.20px;background:#f1f1f0;border-top:1px solid #fff;border-left:1px solid #fff;box-shadow:inset -1px -1px 0 #dcdcdc;box-sizing:border-box;overflow:hidden"></div><div style="position:absolute;left:390.85px;top:511.00px;width:49.90px;height:23.20px;background:#f1f1f0;border-top:1px solid #fff;border-left:1px solid #fff;box-shadow:inset -1px -1px 0 #dcdcdc;box-sizing:border-box;overflow:hidden"></div><div style="position:absolute;left:442.05px;top:511.00px;width:46.90px;height:23.20px;background:#f1f1f0;border-top:1px solid #fff;border-left:1px solid #fff;box-shadow:inset -1px -1px 0 #dcdcdc;box-sizing:border-box;overflow:hidden"></div><div style="position:absolute;left:490.25px;top:511.00px;width:45.20px;height:23.20px;background:#f1f1f0;border-top:1px solid #fff;border-left:1px solid #fff;box-shadow:inset -1px -1px 0 #dcdcdc;box-sizing:border-box;overflow:hidden"></div><div style="position:absolute;left:536.75px;top:511.00px;width:47.50px;height:23.20px;background:#f1f1f0;border-top:1px solid #fff;border-left:1px solid #fff;box-shadow:inset -1px -1px 0 #dcdcdc;box-sizing:border-box;overflow:hidden"></div><div style="position:absolute;left:585.55px;top:511.00px;width:57.00px;height:23.20px;background:#f1f1f0;border-top:1px solid #fff;border-left:1px solid #fff;box-shadow:inset -1px -1px 0 #dcdcdc;box-sizing:border-box;overflow:hidden"></div><div style="position:absolute;left:643.85px;top:511.00px;width:56.40px;height:23.20px;background:#f1f1f0;border-top:1px solid #fff;border-left:1px solid #fff;box-shadow:inset -1px -1px 0 #dcdcdc;box-sizing:border-box;overflow:hidden"></div><div style="position:absolute;left:701.55px;top:511.00px;width:44.70px;height:23.20px;background:#f1f1f0;border-top:1px solid #fff;border-left:1px solid #fff;box-shadow:inset -1px -1px 0 #dcdcdc;box-sizing:border-box;overflow:hidden"></div><div style="position:absolute;left:747.55px;top:511.00px;width:44.80px;height:23.20px;background:#f1f1f0;border-top:1px solid #fff;border-left:1px solid #fff;box-shadow:inset -1px -1px 0 #dcdcdc;box-sizing:border-box;overflow:hidden"></div><div style="position:absolute;left:793.20px;top:511.00px;width:121.80px;height:23.20px;background:#f1f1f0;border-top:1px solid #fff;border-left:1px solid #fff;box-shadow:inset -1px -1px 0 #dcdcdc;box-sizing:border-box;overflow:hidden"></div><div style="position:absolute;left:915.00px;top:511.00px;width:1.00px;height:24.80px;background:#a4a4a4"></div><div style="position:absolute;left:793.20px;top:534.20px;width:122.80px;height:1.60px;background:#a4a4a4"></div><div style="position:absolute;left:24.00px;top:534.30px;width:769.50px;height:1.30px;background:#aeaeae"></div><div style="position:absolute;left:24.00px;top:564.30px;width:769.50px;height:1.30px;background:#aeaeae"></div><div style="position:absolute;left:24.00px;top:593.80px;width:769.50px;height:1.30px;background:#aeaeae"></div><div style="position:absolute;left:24.00px;top:623.30px;width:769.50px;height:1.30px;background:#aeaeae"></div><div style="position:absolute;left:24.00px;top:652.80px;width:769.50px;height:1.30px;background:#aeaeae"></div><div style="position:absolute;left:24.00px;top:682.30px;width:769.50px;height:1.30px;background:#aeaeae"></div><div style="position:absolute;left:24.00px;top:712.10px;width:769.50px;height:1.30px;background:#aeaeae"></div><div style="position:absolute;left:47.85px;top:509.50px;width:1.30px;height:208.00px;background:#aeaeae"></div><div style="position:absolute;left:106.85px;top:509.50px;width:1.30px;height:208.00px;background:#aeaeae"></div><div style="position:absolute;left:146.15px;top:509.50px;width:1.30px;height:208.00px;background:#aeaeae"></div><div style="position:absolute;left:184.15px;top:509.50px;width:1.30px;height:208.00px;background:#aeaeae"></div><div style="position:absolute;left:222.35px;top:509.50px;width:1.30px;height:208.00px;background:#aeaeae"></div><div style="position:absolute;left:260.15px;top:509.50px;width:1.30px;height:208.00px;background:#aeaeae"></div><div style="position:absolute;left:299.55px;top:509.50px;width:1.30px;height:208.00px;background:#aeaeae"></div><div style="position:absolute;left:339.25px;top:509.50px;width:1.30px;height:208.00px;background:#aeaeae"></div><div style="position:absolute;left:389.55px;top:509.50px;width:1.30px;height:208.00px;background:#aeaeae"></div><div style="position:absolute;left:440.75px;top:509.50px;width:1.30px;height:208.00px;background:#aeaeae"></div><div style="position:absolute;left:488.95px;top:509.50px;width:1.30px;height:208.00px;background:#aeaeae"></div><div style="position:absolute;left:535.45px;top:509.50px;width:1.30px;height:208.00px;background:#aeaeae"></div><div style="position:absolute;left:584.25px;top:509.50px;width:1.30px;height:208.00px;background:#aeaeae"></div><div style="position:absolute;left:642.55px;top:509.50px;width:1.30px;height:208.00px;background:#aeaeae"></div><div style="position:absolute;left:700.25px;top:509.50px;width:1.30px;height:208.00px;background:#aeaeae"></div><div style="position:absolute;left:746.25px;top:509.50px;width:1.30px;height:208.00px;background:#aeaeae"></div><div style="position:absolute;left:792.35px;top:509.50px;width:1.30px;height:208.00px;background:#aeaeae"></div><svg role="img" aria-label="形状" style="position:absolute;left:62.60px;top:514.60px;overflow:visible;" width="30.80" height="16.32" viewBox="0 -880 2000 1000" preserveAspectRatio="none"><text x="0" y="0" font-size="1000" textLength="2000" lengthAdjust="spacingAndGlyphs" fill="#333" font-family="'Liberation Serif','Noto Serif CJK SC',serif">形状</text></svg><svg role="img" aria-label="Xp" style="position:absolute;left:119.45px;top:514.60px;overflow:visible;" width="15.40" height="16.32" viewBox="0 -880 1000 1000" preserveAspectRatio="none"><text x="0" y="0" font-size="1000" textLength="1000" lengthAdjust="spacingAndGlyphs" fill="#333" font-family="'Liberation Serif','Noto Serif CJK SC',serif">Xp</text></svg><svg role="img" aria-label="Yp" style="position:absolute;left:158.10px;top:514.60px;overflow:visible;" width="15.40" height="16.32" viewBox="0 -880 1000 1000" preserveAspectRatio="none"><text x="0" y="0" font-size="1000" textLength="1000" lengthAdjust="spacingAndGlyphs" fill="#333" font-family="'Liberation Serif','Noto Serif CJK SC',serif">Yp</text></svg><svg role="img" aria-label="Xs" style="position:absolute;left:196.20px;top:514.60px;overflow:visible;" width="15.40" height="16.32" viewBox="0 -880 1000 1000" preserveAspectRatio="none"><text x="0" y="0" font-size="1000" textLength="1000" lengthAdjust="spacingAndGlyphs" fill="#333" font-family="'Liberation Serif','Noto Serif CJK SC',serif">Xs</text></svg><svg role="img" aria-label="Ys" style="position:absolute;left:234.20px;top:514.60px;overflow:visible;" width="15.40" height="16.32" viewBox="0 -880 1000 1000" preserveAspectRatio="none"><text x="0" y="0" font-size="1000" textLength="1000" lengthAdjust="spacingAndGlyphs" fill="#333" font-family="'Liberation Serif','Noto Serif CJK SC',serif">Ys</text></svg><svg role="img" aria-label="Wp" style="position:absolute;left:272.80px;top:514.60px;overflow:visible;" width="15.40" height="16.32" viewBox="0 -880 1000 1000" preserveAspectRatio="none"><text x="0" y="0" font-size="1000" textLength="1000" lengthAdjust="spacingAndGlyphs" fill="#333" font-family="'Liberation Serif','Noto Serif CJK SC',serif">Wp</text></svg><svg role="img" aria-label="宽mm" style="position:absolute;left:304.65px;top:514.60px;overflow:visible;" width="30.80" height="16.32" viewBox="0 -880 2000 1000" preserveAspectRatio="none"><text x="0" y="0" font-size="1000" textLength="2000" lengthAdjust="spacingAndGlyphs" fill="#333" font-family="'Liberation Serif','Noto Serif CJK SC',serif">宽mm</text></svg><svg role="img" aria-label="PV" style="position:absolute;left:357.35px;top:514.60px;overflow:visible;" width="15.40" height="16.32" viewBox="0 -880 1000 1000" preserveAspectRatio="none"><text x="0" y="0" font-size="1000" textLength="1000" lengthAdjust="spacingAndGlyphs" fill="#333" font-family="'Liberation Serif','Noto Serif CJK SC',serif">PV</text></svg><svg role="img" aria-label="RMS" style="position:absolute;left:404.25px;top:514.60px;overflow:visible;" width="23.10" height="16.32" viewBox="0 -880 1500 1000" preserveAspectRatio="none"><text x="0" y="0" font-size="1000" textLength="1500" lengthAdjust="spacingAndGlyphs" fill="#333" font-family="'Liberation Serif','Noto Serif CJK SC',serif">RMS</text></svg><svg role="img" aria-label="TTV" style="position:absolute;left:453.95px;top:514.60px;overflow:visible;" width="23.10" height="16.32" viewBox="0 -880 1500 1000" preserveAspectRatio="none"><text x="0" y="0" font-size="1000" textLength="1500" lengthAdjust="spacingAndGlyphs" fill="#333" font-family="'Liberation Serif','Noto Serif CJK SC',serif">TTV</text></svg><svg role="img" aria-label="PV上限" style="position:absolute;left:489.75px;top:514.60px;overflow:visible;clip-path:inset(0 1.0px 0 1.0px);" width="46.20" height="16.32" viewBox="0 -880 3000 1000" preserveAspectRatio="none"><text x="0" y="0" font-size="1000" textLength="3000" lengthAdjust="spacingAndGlyphs" fill="#333" font-family="'Liberation Serif','Noto Serif CJK SC',serif">PV上限</text></svg><svg role="img" aria-label="PV下限" style="position:absolute;left:537.40px;top:514.60px;overflow:visible;" width="46.20" height="16.32" viewBox="0 -880 3000 1000" preserveAspectRatio="none"><text x="0" y="0" font-size="1000" textLength="3000" lengthAdjust="spacingAndGlyphs" fill="#333" font-family="'Liberation Serif','Noto Serif CJK SC',serif">PV下限</text></svg><svg role="img" aria-label="RMS上限" style="position:absolute;left:587.10px;top:514.60px;overflow:visible;" width="53.90" height="16.32" viewBox="0 -880 3500 1000" preserveAspectRatio="none"><text x="0" y="0" font-size="1000" textLength="3500" lengthAdjust="spacingAndGlyphs" fill="#333" font-family="'Liberation Serif','Noto Serif CJK SC',serif">RMS上限</text></svg><svg role="img" aria-label="RMS下限" style="position:absolute;left:645.10px;top:514.60px;overflow:visible;" width="53.90" height="16.32" viewBox="0 -880 3500 1000" preserveAspectRatio="none"><text x="0" y="0" font-size="1000" textLength="3500" lengthAdjust="spacingAndGlyphs" fill="#333" font-family="'Liberation Serif','Noto Serif CJK SC',serif">RMS下限</text></svg><svg role="img" aria-label="TTV上限" style="position:absolute;left:696.95px;top:514.60px;overflow:visible;clip-path:inset(0 5.1px 0 5.1px);" width="53.90" height="16.32" viewBox="0 -880 3500 1000" preserveAspectRatio="none"><text x="0" y="0" font-size="1000" textLength="3500" lengthAdjust="spacingAndGlyphs" fill="#333" font-family="'Liberation Serif','Noto Serif CJK SC',serif">TTV上限</text></svg><svg role="img" aria-label="TTV下限" style="position:absolute;left:743.00px;top:514.60px;overflow:visible;clip-path:inset(0 5.0px 0 5.0px);" width="53.90" height="16.32" viewBox="0 -880 3500 1000" preserveAspectRatio="none"><text x="0" y="0" font-size="1000" textLength="3500" lengthAdjust="spacingAndGlyphs" fill="#333" font-family="'Liberation Serif','Noto Serif CJK SC',serif">TTV下限</text></svg><div style="position:absolute;left:25.55px;top:535.80px;width:22.30px;height:28.40px;background:#f1f1f0;border-top:1px solid #fff;border-left:1px solid #fff;box-shadow:inset -1px -1px 0 #dcdcdc;box-sizing:border-box;overflow:hidden"></div><svg role="img" aria-label="1" style="position:absolute;left:31.50px;top:541.40px;overflow:visible;" width="8.25" height="16.50" viewBox="0 -880 500 1000" preserveAspectRatio="none"><text x="0" y="0" font-size="1000" fill="#3a3a3a" font-family="'Liberation Serif','Noto Serif CJK SC',serif">1</text></svg><svg role="img" aria-label="圆形" style="position:absolute;left:57.45px;top:542.20px;overflow:visible;" width="26.10" height="15.00" viewBox="0 -880 2000 1000" preserveAspectRatio="none"><text x="0" y="0" font-size="1000" textLength="2000" lengthAdjust="spacingAndGlyphs" fill="#3c3834" font-family="'Liberation Serif','Noto Serif CJK SC',serif">圆形</text></svg><div style="position:absolute;left:91.60px;top:535.80px;width:15.10px;height:28.40px;background:#f3e93b;box-shadow:inset -1px -1px 0 rgba(0,0,0,.25)"></div><svg style="position:absolute;left:93.5px;top:548.40px" width="11.4" height="6.2" viewBox="0 0 11.4 6.2"><polygon points="0,0 11.4,0 5.7,6.2" fill="#111"/></svg><div style="position:absolute;left:108.15px;top:542.40px;width:38.00px;text-align:center;font:normal 15.70px/15.70px 'Liberation Sans';color:#000;white-space:nowrap;-webkit-text-stroke:0.3px #000;"><span style="display:inline-block;transform:scaleX(0.845);">671</span></div><div style="position:absolute;left:147.45px;top:542.40px;width:36.70px;text-align:center;font:normal 15.70px/15.70px 'Liberation Sans';color:#000;white-space:nowrap;-webkit-text-stroke:0.3px #000;"><span style="display:inline-block;transform:scaleX(0.845);">1193</span></div><div style="position:absolute;left:185.45px;top:542.40px;width:36.90px;text-align:center;font:normal 15.70px/15.70px 'Liberation Sans';color:#000;white-space:nowrap;-webkit-text-stroke:0.3px #000;"><span style="display:inline-block;transform:scaleX(0.845);">0</span></div><div style="position:absolute;left:223.65px;top:542.40px;width:36.50px;text-align:center;font:normal 15.70px/15.70px 'Liberation Sans';color:#000;white-space:nowrap;-webkit-text-stroke:0.3px #000;"><span style="display:inline-block;transform:scaleX(0.845);">0</span></div><div style="position:absolute;left:261.45px;top:542.40px;width:38.10px;text-align:center;font:normal 15.70px/15.70px 'Liberation Sans';color:#000;white-space:nowrap;-webkit-text-stroke:0.3px #000;"><span style="display:inline-block;transform:scaleX(0.845);">179</span></div><div style="position:absolute;left:300.85px;top:542.40px;width:38.40px;text-align:center;font:normal 15.70px/15.70px 'Liberation Sans';color:#000;white-space:nowrap;-webkit-text-stroke:0.3px #000;"><span style="display:inline-block;transform:scaleX(0.845);">3.04</span></div><div style="position:absolute;left:340.55px;top:541.00px;width:49.00px;text-align:center;font:bold 18.40px/18.40px 'Liberation Sans';color:#000;white-space:nowrap;"><span style="display:inline-block;transform:scaleX(0.870);">0.235</span></div><div style="position:absolute;left:390.85px;top:541.00px;width:49.90px;text-align:center;font:bold 18.40px/18.40px 'Liberation Sans';color:#000;white-space:nowrap;"><span style="display:inline-block;transform:scaleX(0.870);">0.053</span></div><div style="position:absolute;left:442.05px;top:541.00px;width:46.90px;text-align:center;font:bold 18.40px/18.40px 'Liberation Sans';color:#000;white-space:nowrap;"><span style="display:inline-block;transform:scaleX(0.870);">5.020</span></div><div style="position:absolute;left:490.25px;top:542.40px;width:45.20px;text-align:center;font:normal 15.70px/15.70px 'Liberation Sans';color:#000;white-space:nowrap;-webkit-text-stroke:0.3px #000;"><span style="display:inline-block;transform:scaleX(0.845);">90.000</span></div><div style="position:absolute;left:536.75px;top:542.40px;width:47.50px;text-align:center;font:normal 15.70px/15.70px 'Liberation Sans';color:#000;white-space:nowrap;-webkit-text-stroke:0.3px #000;"><span style="display:inline-block;transform:scaleX(0.845);">0.000</span></div><div style="position:absolute;left:585.55px;top:542.40px;width:57.00px;text-align:center;font:normal 15.70px/15.70px 'Liberation Sans';color:#000;white-space:nowrap;-webkit-text-stroke:0.3px #000;"><span style="display:inline-block;transform:scaleX(0.845);">90.000</span></div><div style="position:absolute;left:643.85px;top:542.40px;width:56.40px;text-align:center;font:normal 15.70px/15.70px 'Liberation Sans';color:#000;white-space:nowrap;-webkit-text-stroke:0.3px #000;"><span style="display:inline-block;transform:scaleX(0.845);">0.000</span></div><div style="position:absolute;left:701.55px;top:542.40px;width:44.70px;text-align:center;font:normal 15.70px/15.70px 'Liberation Sans';color:#000;white-space:nowrap;-webkit-text-stroke:0.3px #000;"><span style="display:inline-block;transform:scaleX(0.845);">90.000</span></div><div style="position:absolute;left:747.55px;top:542.40px;width:44.80px;text-align:center;font:normal 15.70px/15.70px 'Liberation Sans';color:#000;white-space:nowrap;-webkit-text-stroke:0.3px #000;"><span style="display:inline-block;transform:scaleX(0.845);">0.000</span></div><div style="position:absolute;left:25.55px;top:565.80px;width:22.30px;height:27.90px;background:#f1f1f0;border-top:1px solid #fff;border-left:1px solid #fff;box-shadow:inset -1px -1px 0 #dcdcdc;box-sizing:border-box;overflow:hidden"></div><svg role="img" aria-label="2" style="position:absolute;left:31.50px;top:571.15px;overflow:visible;" width="8.25" height="16.50" viewBox="0 -880 500 1000" preserveAspectRatio="none"><text x="0" y="0" font-size="1000" fill="#3a3a3a" font-family="'Liberation Serif','Noto Serif CJK SC',serif">2</text></svg><svg role="img" aria-label="无" style="position:absolute;left:63.98px;top:571.95px;overflow:visible;" width="13.05" height="15.00" viewBox="0 -880 1000 1000" preserveAspectRatio="none"><text x="0" y="0" font-size="1000" fill="#3c3834" font-family="'Liberation Serif','Noto Serif CJK SC',serif">无</text></svg><div style="position:absolute;left:91.60px;top:565.80px;width:15.10px;height:27.90px;background:#66c5d8;box-shadow:inset -1px -1px 0 rgba(0,0,0,.25)"></div><svg style="position:absolute;left:93.5px;top:578.15px" width="11.4" height="6.2" viewBox="0 0 11.4 6.2"><polygon points="0,0 11.4,0 5.7,6.2" fill="#111"/></svg><div style="position:absolute;left:108.15px;top:565.80px;width:38.00px;height:27.90px;background:#e1e1e1"></div><div style="position:absolute;left:108.15px;top:572.15px;width:38.00px;text-align:center;font:normal 15.70px/15.70px 'Liberation Sans';color:#8a8a8a;white-space:nowrap;-webkit-text-stroke:0.3px #8a8a8a;"><span style="display:inline-block;transform:scaleX(0.845);">10</span></div><div style="position:absolute;left:147.45px;top:565.80px;width:36.70px;height:27.90px;background:#e1e1e1"></div><div style="position:absolute;left:147.45px;top:572.15px;width:36.70px;text-align:center;font:normal 15.70px/15.70px 'Liberation Sans';color:#8a8a8a;white-space:nowrap;-webkit-text-stroke:0.3px #8a8a8a;"><span style="display:inline-block;transform:scaleX(0.845);">10</span></div><div style="position:absolute;left:185.45px;top:565.80px;width:36.90px;height:27.90px;background:#e1e1e1"></div><div style="position:absolute;left:185.45px;top:572.15px;width:36.90px;text-align:center;font:normal 15.70px/15.70px 'Liberation Sans';color:#8a8a8a;white-space:nowrap;-webkit-text-stroke:0.3px #8a8a8a;"><span style="display:inline-block;transform:scaleX(0.845);">0</span></div><div style="position:absolute;left:223.65px;top:565.80px;width:36.50px;height:27.90px;background:#e1e1e1"></div><div style="position:absolute;left:223.65px;top:572.15px;width:36.50px;text-align:center;font:normal 15.70px/15.70px 'Liberation Sans';color:#8a8a8a;white-space:nowrap;-webkit-text-stroke:0.3px #8a8a8a;"><span style="display:inline-block;transform:scaleX(0.845);">0</span></div><div style="position:absolute;left:261.45px;top:565.80px;width:38.10px;height:27.90px;background:#e1e1e1"></div><div style="position:absolute;left:261.45px;top:572.15px;width:38.10px;text-align:center;font:normal 15.70px/15.70px 'Liberation Sans';color:#8a8a8a;white-space:nowrap;-webkit-text-stroke:0.3px #8a8a8a;"><span style="display:inline-block;transform:scaleX(0.845);">100</span></div><div style="position:absolute;left:300.85px;top:565.80px;width:38.40px;height:27.90px;background:#e1e1e1"></div><div style="position:absolute;left:300.85px;top:572.15px;width:38.40px;text-align:center;font:normal 15.70px/15.70px 'Liberation Sans';color:#8a8a8a;white-space:nowrap;-webkit-text-stroke:0.3px #8a8a8a;"><span style="display:inline-block;transform:scaleX(0.845);">1.70</span></div><div style="position:absolute;left:340.55px;top:570.75px;width:49.00px;text-align:center;font:bold 18.40px/18.40px 'Liberation Sans';color:#000;white-space:nowrap;"><span style="display:inline-block;transform:scaleX(0.870);">0.000</span></div><div style="position:absolute;left:390.85px;top:565.80px;width:49.90px;height:27.90px;background:#e1e1e1"></div><div style="position:absolute;left:390.85px;top:570.75px;width:49.90px;text-align:center;font:bold 18.40px/18.40px 'Liberation Sans';color:#8a8a8a;white-space:nowrap;"><span style="display:inline-block;transform:scaleX(0.870);">0.000</span></div><div style="position:absolute;left:442.05px;top:565.80px;width:46.90px;height:27.90px;background:#e1e1e1"></div><div style="position:absolute;left:442.05px;top:570.75px;width:46.90px;text-align:center;font:bold 18.40px/18.40px 'Liberation Sans';color:#8a8a8a;white-space:nowrap;"><span style="display:inline-block;transform:scaleX(0.870);">0.000</span></div><div style="position:absolute;left:490.25px;top:565.80px;width:45.20px;height:27.90px;background:#e1e1e1"></div><div style="position:absolute;left:490.25px;top:572.15px;width:45.20px;text-align:center;font:normal 15.70px/15.70px 'Liberation Sans';color:#8a8a8a;white-space:nowrap;-webkit-text-stroke:0.3px #8a8a8a;"><span style="display:inline-block;transform:scaleX(0.845);">90.000</span></div><div style="position:absolute;left:536.75px;top:565.80px;width:47.50px;height:27.90px;background:#e1e1e1"></div><div style="position:absolute;left:536.75px;top:572.15px;width:47.50px;text-align:center;font:normal 15.70px/15.70px 'Liberation Sans';color:#8a8a8a;white-space:nowrap;-webkit-text-stroke:0.3px #8a8a8a;"><span style="display:inline-block;transform:scaleX(0.845);">0.000</span></div><div style="position:absolute;left:585.55px;top:565.80px;width:57.00px;height:27.90px;background:#e1e1e1"></div><div style="position:absolute;left:585.55px;top:572.15px;width:57.00px;text-align:center;font:normal 15.70px/15.70px 'Liberation Sans';color:#8a8a8a;white-space:nowrap;-webkit-text-stroke:0.3px #8a8a8a;"><span style="display:inline-block;transform:scaleX(0.845);">90.000</span></div><div style="position:absolute;left:643.85px;top:565.80px;width:56.40px;height:27.90px;background:#e1e1e1"></div><div style="position:absolute;left:643.85px;top:572.15px;width:56.40px;text-align:center;font:normal 15.70px/15.70px 'Liberation Sans';color:#8a8a8a;white-space:nowrap;-webkit-text-stroke:0.3px #8a8a8a;"><span style="display:inline-block;transform:scaleX(0.845);">0.000</span></div><div style="position:absolute;left:701.55px;top:565.80px;width:44.70px;height:27.90px;background:#e1e1e1"></div><div style="position:absolute;left:701.55px;top:572.15px;width:44.70px;text-align:center;font:normal 15.70px/15.70px 'Liberation Sans';color:#8a8a8a;white-space:nowrap;-webkit-text-stroke:0.3px #8a8a8a;"><span style="display:inline-block;transform:scaleX(0.845);">90.000</span></div><div style="position:absolute;left:747.55px;top:565.80px;width:44.80px;height:27.90px;background:#e1e1e1"></div><div style="position:absolute;left:747.55px;top:572.15px;width:44.80px;text-align:center;font:normal 15.70px/15.70px 'Liberation Sans';color:#8a8a8a;white-space:nowrap;-webkit-text-stroke:0.3px #8a8a8a;"><span style="display:inline-block;transform:scaleX(0.845);">0.000</span></div><div style="position:absolute;left:25.55px;top:595.30px;width:22.30px;height:27.90px;background:#f1f1f0;border-top:1px solid #fff;border-left:1px solid #fff;box-shadow:inset -1px -1px 0 #dcdcdc;box-sizing:border-box;overflow:hidden"></div><svg role="img" aria-label="3" style="position:absolute;left:31.50px;top:600.65px;overflow:visible;" width="8.25" height="16.50" viewBox="0 -880 500 1000" preserveAspectRatio="none"><text x="0" y="0" font-size="1000" fill="#3a3a3a" font-family="'Liberation Serif','Noto Serif CJK SC',serif">3</text></svg><svg role="img" aria-label="无" style="position:absolute;left:63.98px;top:601.45px;overflow:visible;" width="13.05" height="15.00" viewBox="0 -880 1000 1000" preserveAspectRatio="none"><text x="0" y="0" font-size="1000" fill="#3c3834" font-family="'Liberation Serif','Noto Serif CJK SC',serif">无</text></svg><div style="position:absolute;left:91.60px;top:595.30px;width:15.10px;height:27.90px;background:#3c4fa6;box-shadow:inset -1px -1px 0 rgba(0,0,0,.25)"></div><svg style="position:absolute;left:93.5px;top:607.65px" width="11.4" height="6.2" viewBox="0 0 11.4 6.2"><polygon points="0,0 11.4,0 5.7,6.2" fill="#111"/></svg><div style="position:absolute;left:108.15px;top:595.30px;width:38.00px;height:27.90px;background:#e1e1e1"></div><div style="position:absolute;left:108.15px;top:601.65px;width:38.00px;text-align:center;font:normal 15.70px/15.70px 'Liberation Sans';color:#8a8a8a;white-space:nowrap;-webkit-text-stroke:0.3px #8a8a8a;"><span style="display:inline-block;transform:scaleX(0.845);">20</span></div><div style="position:absolute;left:147.45px;top:595.30px;width:36.70px;height:27.90px;background:#e1e1e1"></div><div style="position:absolute;left:147.45px;top:601.65px;width:36.70px;text-align:center;font:normal 15.70px/15.70px 'Liberation Sans';color:#8a8a8a;white-space:nowrap;-webkit-text-stroke:0.3px #8a8a8a;"><span style="display:inline-block;transform:scaleX(0.845);">20</span></div><div style="position:absolute;left:185.45px;top:595.30px;width:36.90px;height:27.90px;background:#e1e1e1"></div><div style="position:absolute;left:185.45px;top:601.65px;width:36.90px;text-align:center;font:normal 15.70px/15.70px 'Liberation Sans';color:#8a8a8a;white-space:nowrap;-webkit-text-stroke:0.3px #8a8a8a;"><span style="display:inline-block;transform:scaleX(0.845);">0</span></div><div style="position:absolute;left:223.65px;top:595.30px;width:36.50px;height:27.90px;background:#e1e1e1"></div><div style="position:absolute;left:223.65px;top:601.65px;width:36.50px;text-align:center;font:normal 15.70px/15.70px 'Liberation Sans';color:#8a8a8a;white-space:nowrap;-webkit-text-stroke:0.3px #8a8a8a;"><span style="display:inline-block;transform:scaleX(0.845);">0</span></div><div style="position:absolute;left:261.45px;top:595.30px;width:38.10px;height:27.90px;background:#e1e1e1"></div><div style="position:absolute;left:261.45px;top:601.65px;width:38.10px;text-align:center;font:normal 15.70px/15.70px 'Liberation Sans';color:#8a8a8a;white-space:nowrap;-webkit-text-stroke:0.3px #8a8a8a;"><span style="display:inline-block;transform:scaleX(0.845);">100</span></div><div style="position:absolute;left:300.85px;top:595.30px;width:38.40px;height:27.90px;background:#e1e1e1"></div><div style="position:absolute;left:300.85px;top:601.65px;width:38.40px;text-align:center;font:normal 15.70px/15.70px 'Liberation Sans';color:#8a8a8a;white-space:nowrap;-webkit-text-stroke:0.3px #8a8a8a;"><span style="display:inline-block;transform:scaleX(0.845);">1.70</span></div><div style="position:absolute;left:340.55px;top:600.25px;width:49.00px;text-align:center;font:bold 18.40px/18.40px 'Liberation Sans';color:#000;white-space:nowrap;"><span style="display:inline-block;transform:scaleX(0.870);">0.000</span></div><div style="position:absolute;left:390.85px;top:595.30px;width:49.90px;height:27.90px;background:#e1e1e1"></div><div style="position:absolute;left:390.85px;top:600.25px;width:49.90px;text-align:center;font:bold 18.40px/18.40px 'Liberation Sans';color:#8a8a8a;white-space:nowrap;"><span style="display:inline-block;transform:scaleX(0.870);">0.000</span></div><div style="position:absolute;left:442.05px;top:595.30px;width:46.90px;height:27.90px;background:#e1e1e1"></div><div style="position:absolute;left:442.05px;top:600.25px;width:46.90px;text-align:center;font:bold 18.40px/18.40px 'Liberation Sans';color:#8a8a8a;white-space:nowrap;"><span style="display:inline-block;transform:scaleX(0.870);">0.000</span></div><div style="position:absolute;left:490.25px;top:595.30px;width:45.20px;height:27.90px;background:#e1e1e1"></div><div style="position:absolute;left:490.25px;top:601.65px;width:45.20px;text-align:center;font:normal 15.70px/15.70px 'Liberation Sans';color:#8a8a8a;white-space:nowrap;-webkit-text-stroke:0.3px #8a8a8a;"><span style="display:inline-block;transform:scaleX(0.845);">90.000</span></div><div style="position:absolute;left:536.75px;top:595.30px;width:47.50px;height:27.90px;background:#e1e1e1"></div><div style="position:absolute;left:536.75px;top:601.65px;width:47.50px;text-align:center;font:normal 15.70px/15.70px 'Liberation Sans';color:#8a8a8a;white-space:nowrap;-webkit-text-stroke:0.3px #8a8a8a;"><span style="display:inline-block;transform:scaleX(0.845);">0.000</span></div><div style="position:absolute;left:585.55px;top:595.30px;width:57.00px;height:27.90px;background:#e1e1e1"></div><div style="position:absolute;left:585.55px;top:601.65px;width:57.00px;text-align:center;font:normal 15.70px/15.70px 'Liberation Sans';color:#8a8a8a;white-space:nowrap;-webkit-text-stroke:0.3px #8a8a8a;"><span style="display:inline-block;transform:scaleX(0.845);">90.000</span></div><div style="position:absolute;left:643.85px;top:595.30px;width:56.40px;height:27.90px;background:#e1e1e1"></div><div style="position:absolute;left:643.85px;top:601.65px;width:56.40px;text-align:center;font:normal 15.70px/15.70px 'Liberation Sans';color:#8a8a8a;white-space:nowrap;-webkit-text-stroke:0.3px #8a8a8a;"><span style="display:inline-block;transform:scaleX(0.845);">0.000</span></div><div style="position:absolute;left:701.55px;top:595.30px;width:44.70px;height:27.90px;background:#e1e1e1"></div><div style="position:absolute;left:701.55px;top:601.65px;width:44.70px;text-align:center;font:normal 15.70px/15.70px 'Liberation Sans';color:#8a8a8a;white-space:nowrap;-webkit-text-stroke:0.3px #8a8a8a;"><span style="display:inline-block;transform:scaleX(0.845);">90.000</span></div><div style="position:absolute;left:747.55px;top:595.30px;width:44.80px;height:27.90px;background:#e1e1e1"></div><div style="position:absolute;left:747.55px;top:601.65px;width:44.80px;text-align:center;font:normal 15.70px/15.70px 'Liberation Sans';color:#8a8a8a;white-space:nowrap;-webkit-text-stroke:0.3px #8a8a8a;"><span style="display:inline-block;transform:scaleX(0.845);">0.000</span></div><div style="position:absolute;left:25.55px;top:624.80px;width:22.30px;height:27.90px;background:#f1f1f0;border-top:1px solid #fff;border-left:1px solid #fff;box-shadow:inset -1px -1px 0 #dcdcdc;box-sizing:border-box;overflow:hidden"></div><svg role="img" aria-label="4" style="position:absolute;left:31.50px;top:630.15px;overflow:visible;" width="8.25" height="16.50" viewBox="0 -880 500 1000" preserveAspectRatio="none"><text x="0" y="0" font-size="1000" fill="#3a3a3a" font-family="'Liberation Serif','Noto Serif CJK SC',serif">4</text></svg><svg role="img" aria-label="无" style="position:absolute;left:63.98px;top:630.95px;overflow:visible;" width="13.05" height="15.00" viewBox="0 -880 1000 1000" preserveAspectRatio="none"><text x="0" y="0" font-size="1000" fill="#3c3834" font-family="'Liberation Serif','Noto Serif CJK SC',serif">无</text></svg><div style="position:absolute;left:91.60px;top:624.80px;width:15.10px;height:27.90px;background:#b455a8;box-shadow:inset -1px -1px 0 rgba(0,0,0,.25)"></div><svg style="position:absolute;left:93.5px;top:637.15px" width="11.4" height="6.2" viewBox="0 0 11.4 6.2"><polygon points="0,0 11.4,0 5.7,6.2" fill="#111"/></svg><div style="position:absolute;left:108.15px;top:624.80px;width:38.00px;height:27.90px;background:#e1e1e1"></div><div style="position:absolute;left:108.15px;top:631.15px;width:38.00px;text-align:center;font:normal 15.70px/15.70px 'Liberation Sans';color:#8a8a8a;white-space:nowrap;-webkit-text-stroke:0.3px #8a8a8a;"><span style="display:inline-block;transform:scaleX(0.845);">30</span></div><div style="position:absolute;left:147.45px;top:624.80px;width:36.70px;height:27.90px;background:#e1e1e1"></div><div style="position:absolute;left:147.45px;top:631.15px;width:36.70px;text-align:center;font:normal 15.70px/15.70px 'Liberation Sans';color:#8a8a8a;white-space:nowrap;-webkit-text-stroke:0.3px #8a8a8a;"><span style="display:inline-block;transform:scaleX(0.845);">30</span></div><div style="position:absolute;left:185.45px;top:624.80px;width:36.90px;height:27.90px;background:#e1e1e1"></div><div style="position:absolute;left:185.45px;top:631.15px;width:36.90px;text-align:center;font:normal 15.70px/15.70px 'Liberation Sans';color:#8a8a8a;white-space:nowrap;-webkit-text-stroke:0.3px #8a8a8a;"><span style="display:inline-block;transform:scaleX(0.845);">0</span></div><div style="position:absolute;left:223.65px;top:624.80px;width:36.50px;height:27.90px;background:#e1e1e1"></div><div style="position:absolute;left:223.65px;top:631.15px;width:36.50px;text-align:center;font:normal 15.70px/15.70px 'Liberation Sans';color:#8a8a8a;white-space:nowrap;-webkit-text-stroke:0.3px #8a8a8a;"><span style="display:inline-block;transform:scaleX(0.845);">0</span></div><div style="position:absolute;left:261.45px;top:624.80px;width:38.10px;height:27.90px;background:#e1e1e1"></div><div style="position:absolute;left:261.45px;top:631.15px;width:38.10px;text-align:center;font:normal 15.70px/15.70px 'Liberation Sans';color:#8a8a8a;white-space:nowrap;-webkit-text-stroke:0.3px #8a8a8a;"><span style="display:inline-block;transform:scaleX(0.845);">100</span></div><div style="position:absolute;left:300.85px;top:624.80px;width:38.40px;height:27.90px;background:#e1e1e1"></div><div style="position:absolute;left:300.85px;top:631.15px;width:38.40px;text-align:center;font:normal 15.70px/15.70px 'Liberation Sans';color:#8a8a8a;white-space:nowrap;-webkit-text-stroke:0.3px #8a8a8a;"><span style="display:inline-block;transform:scaleX(0.845);">1.70</span></div><div style="position:absolute;left:340.55px;top:629.75px;width:49.00px;text-align:center;font:bold 18.40px/18.40px 'Liberation Sans';color:#000;white-space:nowrap;"><span style="display:inline-block;transform:scaleX(0.870);">0.000</span></div><div style="position:absolute;left:390.85px;top:624.80px;width:49.90px;height:27.90px;background:#e1e1e1"></div><div style="position:absolute;left:390.85px;top:629.75px;width:49.90px;text-align:center;font:bold 18.40px/18.40px 'Liberation Sans';color:#8a8a8a;white-space:nowrap;"><span style="display:inline-block;transform:scaleX(0.870);">0.000</span></div><div style="position:absolute;left:442.05px;top:624.80px;width:46.90px;height:27.90px;background:#e1e1e1"></div><div style="position:absolute;left:442.05px;top:629.75px;width:46.90px;text-align:center;font:bold 18.40px/18.40px 'Liberation Sans';color:#8a8a8a;white-space:nowrap;"><span style="display:inline-block;transform:scaleX(0.870);">0.000</span></div><div style="position:absolute;left:490.25px;top:624.80px;width:45.20px;height:27.90px;background:#e1e1e1"></div><div style="position:absolute;left:490.25px;top:631.15px;width:45.20px;text-align:center;font:normal 15.70px/15.70px 'Liberation Sans';color:#8a8a8a;white-space:nowrap;-webkit-text-stroke:0.3px #8a8a8a;"><span style="display:inline-block;transform:scaleX(0.845);">90.000</span></div><div style="position:absolute;left:536.75px;top:624.80px;width:47.50px;height:27.90px;background:#e1e1e1"></div><div style="position:absolute;left:536.75px;top:631.15px;width:47.50px;text-align:center;font:normal 15.70px/15.70px 'Liberation Sans';color:#8a8a8a;white-space:nowrap;-webkit-text-stroke:0.3px #8a8a8a;"><span style="display:inline-block;transform:scaleX(0.845);">0.000</span></div><div style="position:absolute;left:585.55px;top:624.80px;width:57.00px;height:27.90px;background:#e1e1e1"></div><div style="position:absolute;left:585.55px;top:631.15px;width:57.00px;text-align:center;font:normal 15.70px/15.70px 'Liberation Sans';color:#8a8a8a;white-space:nowrap;-webkit-text-stroke:0.3px #8a8a8a;"><span style="display:inline-block;transform:scaleX(0.845);">90.000</span></div><div style="position:absolute;left:643.85px;top:624.80px;width:56.40px;height:27.90px;background:#e1e1e1"></div><div style="position:absolute;left:643.85px;top:631.15px;width:56.40px;text-align:center;font:normal 15.70px/15.70px 'Liberation Sans';color:#8a8a8a;white-space:nowrap;-webkit-text-stroke:0.3px #8a8a8a;"><span style="display:inline-block;transform:scaleX(0.845);">0.000</span></div><div style="position:absolute;left:701.55px;top:624.80px;width:44.70px;height:27.90px;background:#e1e1e1"></div><div style="position:absolute;left:701.55px;top:631.15px;width:44.70px;text-align:center;font:normal 15.70px/15.70px 'Liberation Sans';color:#8a8a8a;white-space:nowrap;-webkit-text-stroke:0.3px #8a8a8a;"><span style="display:inline-block;transform:scaleX(0.845);">90.000</span></div><div style="position:absolute;left:747.55px;top:624.80px;width:44.80px;height:27.90px;background:#e1e1e1"></div><div style="position:absolute;left:747.55px;top:631.15px;width:44.80px;text-align:center;font:normal 15.70px/15.70px 'Liberation Sans';color:#8a8a8a;white-space:nowrap;-webkit-text-stroke:0.3px #8a8a8a;"><span style="display:inline-block;transform:scaleX(0.845);">0.000</span></div><div style="position:absolute;left:25.55px;top:654.30px;width:22.30px;height:27.90px;background:#f1f1f0;border-top:1px solid #fff;border-left:1px solid #fff;box-shadow:inset -1px -1px 0 #dcdcdc;box-sizing:border-box;overflow:hidden"></div><svg role="img" aria-label="5" style="position:absolute;left:31.50px;top:659.65px;overflow:visible;" width="8.25" height="16.50" viewBox="0 -880 500 1000" preserveAspectRatio="none"><text x="0" y="0" font-size="1000" fill="#3a3a3a" font-family="'Liberation Serif','Noto Serif CJK SC',serif">5</text></svg><svg role="img" aria-label="无" style="position:absolute;left:63.98px;top:660.45px;overflow:visible;" width="13.05" height="15.00" viewBox="0 -880 1000 1000" preserveAspectRatio="none"><text x="0" y="0" font-size="1000" fill="#3c3834" font-family="'Liberation Serif','Noto Serif CJK SC',serif">无</text></svg><div style="position:absolute;left:91.60px;top:654.30px;width:15.10px;height:27.90px;background:#968527;box-shadow:inset -1px -1px 0 rgba(0,0,0,.25)"></div><svg style="position:absolute;left:93.5px;top:666.65px" width="11.4" height="6.2" viewBox="0 0 11.4 6.2"><polygon points="0,0 11.4,0 5.7,6.2" fill="#111"/></svg><div style="position:absolute;left:108.15px;top:654.30px;width:38.00px;height:27.90px;background:#e1e1e1"></div><div style="position:absolute;left:108.15px;top:660.65px;width:38.00px;text-align:center;font:normal 15.70px/15.70px 'Liberation Sans';color:#8a8a8a;white-space:nowrap;-webkit-text-stroke:0.3px #8a8a8a;"><span style="display:inline-block;transform:scaleX(0.845);">40</span></div><div style="position:absolute;left:147.45px;top:654.30px;width:36.70px;height:27.90px;background:#e1e1e1"></div><div style="position:absolute;left:147.45px;top:660.65px;width:36.70px;text-align:center;font:normal 15.70px/15.70px 'Liberation Sans';color:#8a8a8a;white-space:nowrap;-webkit-text-stroke:0.3px #8a8a8a;"><span style="display:inline-block;transform:scaleX(0.845);">40</span></div><div style="position:absolute;left:185.45px;top:654.30px;width:36.90px;height:27.90px;background:#e1e1e1"></div><div style="position:absolute;left:185.45px;top:660.65px;width:36.90px;text-align:center;font:normal 15.70px/15.70px 'Liberation Sans';color:#8a8a8a;white-space:nowrap;-webkit-text-stroke:0.3px #8a8a8a;"><span style="display:inline-block;transform:scaleX(0.845);">0</span></div><div style="position:absolute;left:223.65px;top:654.30px;width:36.50px;height:27.90px;background:#e1e1e1"></div><div style="position:absolute;left:223.65px;top:660.65px;width:36.50px;text-align:center;font:normal 15.70px/15.70px 'Liberation Sans';color:#8a8a8a;white-space:nowrap;-webkit-text-stroke:0.3px #8a8a8a;"><span style="display:inline-block;transform:scaleX(0.845);">0</span></div><div style="position:absolute;left:261.45px;top:654.30px;width:38.10px;height:27.90px;background:#e1e1e1"></div><div style="position:absolute;left:261.45px;top:660.65px;width:38.10px;text-align:center;font:normal 15.70px/15.70px 'Liberation Sans';color:#8a8a8a;white-space:nowrap;-webkit-text-stroke:0.3px #8a8a8a;"><span style="display:inline-block;transform:scaleX(0.845);">100</span></div><div style="position:absolute;left:300.85px;top:654.30px;width:38.40px;height:27.90px;background:#e1e1e1"></div><div style="position:absolute;left:300.85px;top:660.65px;width:38.40px;text-align:center;font:normal 15.70px/15.70px 'Liberation Sans';color:#8a8a8a;white-space:nowrap;-webkit-text-stroke:0.3px #8a8a8a;"><span style="display:inline-block;transform:scaleX(0.845);">1.70</span></div><div style="position:absolute;left:340.55px;top:659.25px;width:49.00px;text-align:center;font:bold 18.40px/18.40px 'Liberation Sans';color:#000;white-space:nowrap;"><span style="display:inline-block;transform:scaleX(0.870);">0.000</span></div><div style="position:absolute;left:390.85px;top:654.30px;width:49.90px;height:27.90px;background:#e1e1e1"></div><div style="position:absolute;left:390.85px;top:659.25px;width:49.90px;text-align:center;font:bold 18.40px/18.40px 'Liberation Sans';color:#8a8a8a;white-space:nowrap;"><span style="display:inline-block;transform:scaleX(0.870);">0.000</span></div><div style="position:absolute;left:442.05px;top:654.30px;width:46.90px;height:27.90px;background:#e1e1e1"></div><div style="position:absolute;left:442.05px;top:659.25px;width:46.90px;text-align:center;font:bold 18.40px/18.40px 'Liberation Sans';color:#8a8a8a;white-space:nowrap;"><span style="display:inline-block;transform:scaleX(0.870);">0.000</span></div><div style="position:absolute;left:490.25px;top:654.30px;width:45.20px;height:27.90px;background:#e1e1e1"></div><div style="position:absolute;left:490.25px;top:660.65px;width:45.20px;text-align:center;font:normal 15.70px/15.70px 'Liberation Sans';color:#8a8a8a;white-space:nowrap;-webkit-text-stroke:0.3px #8a8a8a;"><span style="display:inline-block;transform:scaleX(0.845);">90.000</span></div><div style="position:absolute;left:536.75px;top:654.30px;width:47.50px;height:27.90px;background:#e1e1e1"></div><div style="position:absolute;left:536.75px;top:660.65px;width:47.50px;text-align:center;font:normal 15.70px/15.70px 'Liberation Sans';color:#8a8a8a;white-space:nowrap;-webkit-text-stroke:0.3px #8a8a8a;"><span style="display:inline-block;transform:scaleX(0.845);">0.000</span></div><div style="position:absolute;left:585.55px;top:654.30px;width:57.00px;height:27.90px;background:#e1e1e1"></div><div style="position:absolute;left:585.55px;top:660.65px;width:57.00px;text-align:center;font:normal 15.70px/15.70px 'Liberation Sans';color:#8a8a8a;white-space:nowrap;-webkit-text-stroke:0.3px #8a8a8a;"><span style="display:inline-block;transform:scaleX(0.845);">90.000</span></div><div style="position:absolute;left:643.85px;top:654.30px;width:56.40px;height:27.90px;background:#e1e1e1"></div><div style="position:absolute;left:643.85px;top:660.65px;width:56.40px;text-align:center;font:normal 15.70px/15.70px 'Liberation Sans';color:#8a8a8a;white-space:nowrap;-webkit-text-stroke:0.3px #8a8a8a;"><span style="display:inline-block;transform:scaleX(0.845);">0.000</span></div><div style="position:absolute;left:701.55px;top:654.30px;width:44.70px;height:27.90px;background:#e1e1e1"></div><div style="position:absolute;left:701.55px;top:660.65px;width:44.70px;text-align:center;font:normal 15.70px/15.70px 'Liberation Sans';color:#8a8a8a;white-space:nowrap;-webkit-text-stroke:0.3px #8a8a8a;"><span style="display:inline-block;transform:scaleX(0.845);">90.000</span></div><div style="position:absolute;left:747.55px;top:654.30px;width:44.80px;height:27.90px;background:#e1e1e1"></div><div style="position:absolute;left:747.55px;top:660.65px;width:44.80px;text-align:center;font:normal 15.70px/15.70px 'Liberation Sans';color:#8a8a8a;white-space:nowrap;-webkit-text-stroke:0.3px #8a8a8a;"><span style="display:inline-block;transform:scaleX(0.845);">0.000</span></div><div style="position:absolute;left:25.55px;top:683.80px;width:22.30px;height:28.20px;background:#f1f1f0;border-top:1px solid #fff;border-left:1px solid #fff;box-shadow:inset -1px -1px 0 #dcdcdc;box-sizing:border-box;overflow:hidden"></div><svg role="img" aria-label="6" style="position:absolute;left:31.50px;top:689.30px;overflow:visible;" width="8.25" height="16.50" viewBox="0 -880 500 1000" preserveAspectRatio="none"><text x="0" y="0" font-size="1000" fill="#3a3a3a" font-family="'Liberation Serif','Noto Serif CJK SC',serif">6</text></svg><svg role="img" aria-label="无" style="position:absolute;left:63.98px;top:690.10px;overflow:visible;" width="13.05" height="15.00" viewBox="0 -880 1000 1000" preserveAspectRatio="none"><text x="0" y="0" font-size="1000" fill="#3c3834" font-family="'Liberation Serif','Noto Serif CJK SC',serif">无</text></svg><div style="position:absolute;left:91.60px;top:683.80px;width:15.10px;height:28.20px;background:#7fc65a;box-shadow:inset -1px -1px 0 rgba(0,0,0,.25)"></div><svg style="position:absolute;left:93.5px;top:696.30px" width="11.4" height="6.2" viewBox="0 0 11.4 6.2"><polygon points="0,0 11.4,0 5.7,6.2" fill="#111"/></svg><div style="position:absolute;left:108.15px;top:683.80px;width:38.00px;height:28.20px;background:#e1e1e1"></div><div style="position:absolute;left:108.15px;top:690.30px;width:38.00px;text-align:center;font:normal 15.70px/15.70px 'Liberation Sans';color:#8a8a8a;white-space:nowrap;-webkit-text-stroke:0.3px #8a8a8a;"><span style="display:inline-block;transform:scaleX(0.845);">50</span></div><div style="position:absolute;left:147.45px;top:683.80px;width:36.70px;height:28.20px;background:#e1e1e1"></div><div style="position:absolute;left:147.45px;top:690.30px;width:36.70px;text-align:center;font:normal 15.70px/15.70px 'Liberation Sans';color:#8a8a8a;white-space:nowrap;-webkit-text-stroke:0.3px #8a8a8a;"><span style="display:inline-block;transform:scaleX(0.845);">50</span></div><div style="position:absolute;left:185.45px;top:683.80px;width:36.90px;height:28.20px;background:#e1e1e1"></div><div style="position:absolute;left:185.45px;top:690.30px;width:36.90px;text-align:center;font:normal 15.70px/15.70px 'Liberation Sans';color:#8a8a8a;white-space:nowrap;-webkit-text-stroke:0.3px #8a8a8a;"><span style="display:inline-block;transform:scaleX(0.845);">0</span></div><div style="position:absolute;left:223.65px;top:683.80px;width:36.50px;height:28.20px;background:#e1e1e1"></div><div style="position:absolute;left:223.65px;top:690.30px;width:36.50px;text-align:center;font:normal 15.70px/15.70px 'Liberation Sans';color:#8a8a8a;white-space:nowrap;-webkit-text-stroke:0.3px #8a8a8a;"><span style="display:inline-block;transform:scaleX(0.845);">0</span></div><div style="position:absolute;left:261.45px;top:683.80px;width:38.10px;height:28.20px;background:#e1e1e1"></div><div style="position:absolute;left:261.45px;top:690.30px;width:38.10px;text-align:center;font:normal 15.70px/15.70px 'Liberation Sans';color:#8a8a8a;white-space:nowrap;-webkit-text-stroke:0.3px #8a8a8a;"><span style="display:inline-block;transform:scaleX(0.845);">100</span></div><div style="position:absolute;left:300.85px;top:683.80px;width:38.40px;height:28.20px;background:#e1e1e1"></div><div style="position:absolute;left:300.85px;top:690.30px;width:38.40px;text-align:center;font:normal 15.70px/15.70px 'Liberation Sans';color:#8a8a8a;white-space:nowrap;-webkit-text-stroke:0.3px #8a8a8a;"><span style="display:inline-block;transform:scaleX(0.845);">1.70</span></div><div style="position:absolute;left:340.55px;top:688.90px;width:49.00px;text-align:center;font:bold 18.40px/18.40px 'Liberation Sans';color:#000;white-space:nowrap;"><span style="display:inline-block;transform:scaleX(0.870);">0.000</span></div><div style="position:absolute;left:390.85px;top:683.80px;width:49.90px;height:28.20px;background:#e1e1e1"></div><div style="position:absolute;left:390.85px;top:688.90px;width:49.90px;text-align:center;font:bold 18.40px/18.40px 'Liberation Sans';color:#8a8a8a;white-space:nowrap;"><span style="display:inline-block;transform:scaleX(0.870);">0.000</span></div><div style="position:absolute;left:442.05px;top:683.80px;width:46.90px;height:28.20px;background:#e1e1e1"></div><div style="position:absolute;left:442.05px;top:688.90px;width:46.90px;text-align:center;font:bold 18.40px/18.40px 'Liberation Sans';color:#8a8a8a;white-space:nowrap;"><span style="display:inline-block;transform:scaleX(0.870);">0.000</span></div><div style="position:absolute;left:490.25px;top:683.80px;width:45.20px;height:28.20px;background:#e1e1e1"></div><div style="position:absolute;left:490.25px;top:690.30px;width:45.20px;text-align:center;font:normal 15.70px/15.70px 'Liberation Sans';color:#8a8a8a;white-space:nowrap;-webkit-text-stroke:0.3px #8a8a8a;"><span style="display:inline-block;transform:scaleX(0.845);">90.000</span></div><div style="position:absolute;left:536.75px;top:683.80px;width:47.50px;height:28.20px;background:#e1e1e1"></div><div style="position:absolute;left:536.75px;top:690.30px;width:47.50px;text-align:center;font:normal 15.70px/15.70px 'Liberation Sans';color:#8a8a8a;white-space:nowrap;-webkit-text-stroke:0.3px #8a8a8a;"><span style="display:inline-block;transform:scaleX(0.845);">0.000</span></div><div style="position:absolute;left:585.55px;top:683.80px;width:57.00px;height:28.20px;background:#e1e1e1"></div><div style="position:absolute;left:585.55px;top:690.30px;width:57.00px;text-align:center;font:normal 15.70px/15.70px 'Liberation Sans';color:#8a8a8a;white-space:nowrap;-webkit-text-stroke:0.3px #8a8a8a;"><span style="display:inline-block;transform:scaleX(0.845);">90.000</span></div><div style="position:absolute;left:643.85px;top:683.80px;width:56.40px;height:28.20px;background:#e1e1e1"></div><div style="position:absolute;left:643.85px;top:690.30px;width:56.40px;text-align:center;font:normal 15.70px/15.70px 'Liberation Sans';color:#8a8a8a;white-space:nowrap;-webkit-text-stroke:0.3px #8a8a8a;"><span style="display:inline-block;transform:scaleX(0.845);">0.000</span></div><div style="position:absolute;left:701.55px;top:683.80px;width:44.70px;height:28.20px;background:#e1e1e1"></div><div style="position:absolute;left:701.55px;top:690.30px;width:44.70px;text-align:center;font:normal 15.70px/15.70px 'Liberation Sans';color:#8a8a8a;white-space:nowrap;-webkit-text-stroke:0.3px #8a8a8a;"><span style="display:inline-block;transform:scaleX(0.845);">90.000</span></div><div style="position:absolute;left:747.55px;top:683.80px;width:44.80px;height:28.20px;background:#e1e1e1"></div><div style="position:absolute;left:747.55px;top:690.30px;width:44.80px;text-align:center;font:normal 15.70px/15.70px 'Liberation Sans';color:#8a8a8a;white-space:nowrap;-webkit-text-stroke:0.3px #8a8a8a;"><span style="display:inline-block;transform:scaleX(0.845);">0.000</span></div><div style="position:absolute;left:108.15px;top:713.50px;width:38.00px;height:4.00px;background:#e1e1e1"></div><div style="position:absolute;left:147.45px;top:713.50px;width:36.70px;height:4.00px;background:#e1e1e1"></div><div style="position:absolute;left:185.45px;top:713.50px;width:36.90px;height:4.00px;background:#e1e1e1"></div><div style="position:absolute;left:223.65px;top:713.50px;width:36.50px;height:4.00px;background:#e1e1e1"></div><div style="position:absolute;left:261.45px;top:713.50px;width:38.10px;height:4.00px;background:#e1e1e1"></div><div style="position:absolute;left:300.85px;top:713.50px;width:38.40px;height:4.00px;background:#e1e1e1"></div><div style="position:absolute;left:390.85px;top:713.50px;width:49.90px;height:4.00px;background:#e1e1e1"></div><div style="position:absolute;left:442.05px;top:713.50px;width:46.90px;height:4.00px;background:#e1e1e1"></div><div style="position:absolute;left:490.25px;top:713.50px;width:45.20px;height:4.00px;background:#e1e1e1"></div><div style="position:absolute;left:536.75px;top:713.50px;width:47.50px;height:4.00px;background:#e1e1e1"></div><div style="position:absolute;left:585.55px;top:713.50px;width:57.00px;height:4.00px;background:#e1e1e1"></div><div style="position:absolute;left:643.85px;top:713.50px;width:56.40px;height:4.00px;background:#e1e1e1"></div><div style="position:absolute;left:701.55px;top:713.50px;width:44.70px;height:4.00px;background:#e1e1e1"></div><div style="position:absolute;left:747.55px;top:713.50px;width:44.80px;height:4.00px;background:#e1e1e1"></div><div style="position:absolute;left:25.55px;top:713.50px;width:22.30px;height:4.00px;background:#f1f1f0;border-top:1px solid #fff;border-left:1px solid #fff;box-shadow:inset -1px -1px 0 #dcdcdc;box-sizing:border-box;overflow:hidden"></div><div style="position:absolute;left:91.80px;top:713.70px;width:14.50px;height:3.80px;background:#e2304e"></div><div style="position:absolute;left:916.00px;top:511.00px;width:22.00px;height:206.50px;background:#f4f4f3"></div><div style="position:absolute;left:916.00px;top:511.10px;width:22.00px;height:21.50px;background:linear-gradient(180deg,#fdfdfd 0%,#f2f2f2 45%,#d8d8d8 75%,#a8a8a8 100%);border-top:1px solid #fff;border-left:1px solid #fff;border-right:1.2px solid #333;border-bottom:1.4px solid #333;box-sizing:border-box"></div><div style="position:absolute;left:916.00px;top:533.20px;width:22.00px;height:123.30px;background:linear-gradient(90deg,#ffffff 0%,#f2f2f2 30%,#e4e4e4 65%,#c4c4c4 100%);border-top:1px solid #fff;border-left:1px solid #fff;border-right:1.2px solid #333;border-bottom:1.4px solid #333;box-sizing:border-box"></div><div style="position:absolute;left:916.00px;top:695.30px;width:22.00px;height:22.00px;background:linear-gradient(180deg,#fdfdfd 0%,#f2f2f2 45%,#d8d8d8 75%,#a8a8a8 100%);border-top:1px solid #fff;border-left:1px solid #fff;border-right:1.2px solid #333;border-bottom:1.4px solid #333;box-sizing:border-box"></div><svg style="position:absolute;left:0;top:0;overflow:visible" width="1" height="1"><polygon points="923.6,524.6 930.8,524.6 927.2,518" fill="#111"/><polygon points="923.6,703.2 930.8,703.2 927.2,709.8" fill="#111"/></svg><div style="position:absolute;left:25.00px;top:717.60px;width:891.00px;height:21.70px;background:#f5f4f2"></div><div style="position:absolute;left:25.20px;top:717.80px;width:21.40px;height:21.40px;background:linear-gradient(90deg,#ffffff 0%,#f4f4f4 40%,#c2c2c2 100%);border-top:1px solid #fff;border-left:1px solid #fff;border-right:1.2px solid #444;border-bottom:1.4px solid #444;box-sizing:border-box"></div><div style="position:absolute;left:894.70px;top:717.60px;width:21.30px;height:21.40px;background:linear-gradient(90deg,#ffffff 0%,#f4f4f4 40%,#c2c2c2 100%);border-top:1px solid #fff;border-left:1px solid #fff;border-right:1.2px solid #444;border-bottom:1.4px solid #444;box-sizing:border-box"></div><svg style="position:absolute;left:0;top:0;overflow:visible" width="1" height="1"><polygon points="38.5,724.5 38.5,732.5 32,728.5" fill="#999"/><polygon points="902,724.5 902,732.5 908.5,728.5" fill="#999"/></svg></div></div><svg style="position:absolute;left:0;top:0" width="990" height="759"><path d="M10.40 5.10 H901.00 A76.50 76.50 0 0 1 977.50 81.60 V751.40 H10.40 Z" fill="none" stroke="#1b9de2" stroke-width="2.9"/></svg></body></html>
